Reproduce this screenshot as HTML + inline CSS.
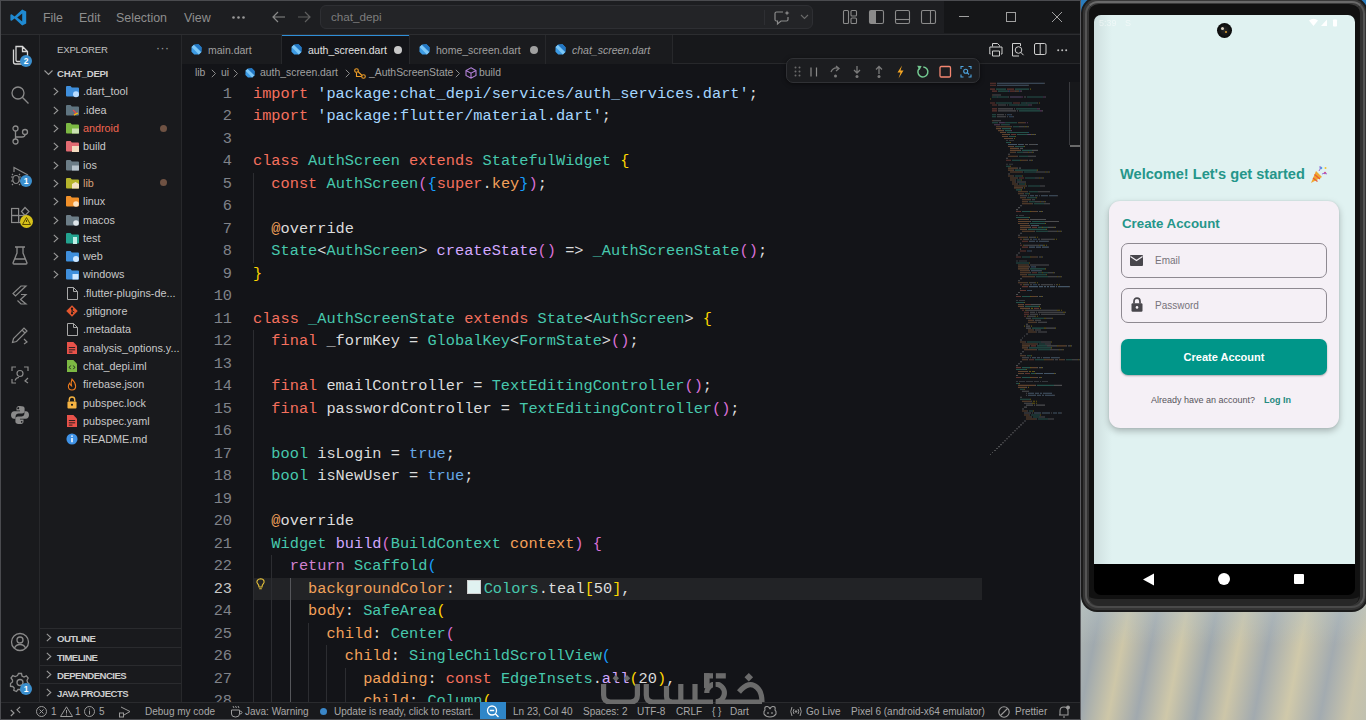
<!DOCTYPE html><html><head><meta charset="utf-8"><style>
*{box-sizing:border-box;margin:0;padding:0}
html,body{width:1366px;height:720px;overflow:hidden;background:#1b1c1f;font-family:"Liberation Sans",sans-serif}
.a{position:absolute}
svg{position:absolute;overflow:visible}
#win{position:absolute;left:0;top:0;width:1081px;height:720px;background:#181a1c;overflow:hidden}
#title{left:0;top:0;width:1081px;height:35px;background:#1d1e21;border-bottom:1px solid #2c2d30}
#wctl{left:944px;top:0;width:137px;height:33px;background:#151618}
.menu{top:10.5px;font-size:12.4px;color:#8e8e8e;white-space:nowrap}
#search{left:320px;top:5px;width:493px;height:24px;background:#232427;border:1px solid #2e2f33;border-radius:6px}
#act{left:0;top:35px;width:40px;height:667px;background:#191a1d;border-right:1px solid #27282b}
#side{left:40px;top:35px;width:142px;height:667px;background:#191a1d;border-right:1px solid #27282b}
.tr{position:absolute;left:0;width:141px;height:18px;font-size:10.8px;color:#c8c8c8;white-space:nowrap;line-height:18px}
#tabs{left:182px;top:35px;width:899px;height:29px;background:#17181b;border-bottom:1px solid #27282b}
.tab{position:absolute;top:0;height:29px;border-right:1px solid #27282b;font-size:10.5px;color:#9a9a9a;line-height:29px;white-space:nowrap}
#crumb{left:182px;top:64px;width:899px;height:18px;background:#131418;font-size:10.4px;color:#a0a0a0;line-height:18px;white-space:nowrap}
#ed{left:182px;top:82px;width:899px;height:620px;background:#131418;overflow:hidden}
.ln{position:absolute;left:0;width:50px;text-align:right;font-family:"Liberation Mono",monospace;font-size:15.3px;color:#6e7681;height:22.5px;line-height:22.5px}
.cl{position:absolute;left:71px;font-family:"Liberation Mono",monospace;font-size:15.3px;color:#dcdcdc;height:22.5px;line-height:22.5px;white-space:pre}
.g{position:absolute;width:1px;background:#2f3034}
.k{color:#f5705e}.s{color:#a5d6ff}.t{color:#47c8ad}.f{color:#d2a8ff}.p{color:#f3a15a}.r{color:#d282d0}.b{color:#67a8e6}
.Y{color:#ffd700}.M{color:#da70d6}.U{color:#179fff}.w{color:#dcdcdc}.at{color:#f3a15a}
#status{left:0;top:702px;width:1081px;height:18px;background:#18191c;border-top:1px solid #2a2b2e;font-size:10px;color:#a8a8a8;line-height:16px;white-space:nowrap}
.st{position:absolute;top:1px}
#emu{left:1081px;top:0;width:285px;height:720px;background:#9aa5a6}
</style></head><body>
<div id="win">
<div id="title" class="a">
<div id="wctl" class="a"></div>
<svg style="left:10px;top:9px" width="17" height="17" viewBox="0 0 17 17"><path d="M12.2 0.6 L16.2 2.5 V14.5 L12.2 16.4 L4.6 9.5 L1.6 11.8 L0.4 11.2 V5.8 L1.6 5.2 L4.6 7.5 Z M12.2 4.6 L7.2 8.5 L12.2 12.4 Z" fill="#1f8ad2"/></svg>
<div class="a menu" style="left:43px">File</div>
<div class="a menu" style="left:79px">Edit</div>
<div class="a menu" style="left:116px">Selection</div>
<div class="a menu" style="left:184px">View</div>
<svg style="left:232px;top:16px" width="14" height="4"><circle cx="1.5" cy="1.5" r="1.3" fill="#9a9a9a"/><circle cx="6.5" cy="1.5" r="1.3" fill="#9a9a9a"/><circle cx="11.5" cy="1.5" r="1.3" fill="#9a9a9a"/></svg>
<svg style="left:272px;top:11px" width="14" height="12"><path d="M6 1 L1 6 L6 11 M1 6 H13" stroke="#8a8a8a" stroke-width="1.2" fill="none"/></svg>
<svg style="left:297px;top:11px" width="14" height="12"><path d="M8 1 L13 6 L8 11 M1 6 H13" stroke="#5f5f5f" stroke-width="1.2" fill="none"/></svg>
<div id="search" class="a"><div class="a" style="left:10px;top:4px;font-size:11.7px;color:#7d7d7d">chat_depi</div><div class="a" style="left:443px;top:4px;width:1px;height:15px;background:#2e2f33"></div></div>
<svg style="left:774px;top:10px" width="18" height="16" viewBox="0 0 18 16"><path d="M1 3.5 Q1 2 2.5 2 H9 M14 7 V9.5 Q14 11 12.5 11 H7 L3.5 14 V11 H2.5 Q1 11 1 9.5 V3.5" stroke="#8b8b8b" stroke-width="1.2" fill="none"/><path d="M13 0.5 L13.7 2.3 L15.5 3 L13.7 3.7 L13 5.5 L12.3 3.7 L10.5 3 L12.3 2.3Z" fill="#8b8b8b"/></svg>
<svg style="left:800px;top:14px" width="9" height="6"><path d="M1 1 L4.5 4.5 L8 1" stroke="#6a6a6a" stroke-width="1.1" fill="none"/></svg>
<svg style="left:843px;top:10px" width="100" height="15" viewBox="0 0 100 15" fill="none" stroke="#8b8b8b" stroke-width="1.1"><rect x="0.5" y="0.5" width="5" height="13" rx="1"/><rect x="8" y="0.5" width="5.5" height="5.5" rx="1"/><rect x="8" y="8" width="5.5" height="5.5" rx="1"/><rect x="26.5" y="0.5" width="14" height="13" rx="1.5"/><rect x="27" y="1" width="6" height="12" fill="#8b8b8b" stroke="none"/><rect x="52.5" y="0.5" width="14" height="13" rx="1.5"/><path d="M52.5 9.5 H66.5"/><rect x="78.5" y="0.5" width="14" height="13" rx="1.5"/><path d="M87.5 0.5 V13.5"/></svg>
<svg style="left:959px;top:11px" width="110" height="12" fill="none" stroke="#a0a0a0" stroke-width="1"><path d="M0 5.5 H10"/><rect x="47.5" y="1.5" width="9" height="9"/><path d="M93 1 L103 11 M103 1 L93 11"/></svg>
</div>
<div id="act" class="a">
<svg style="left:11px;top:10px" width="18" height="20" viewBox="0 0 18 20" fill="none" stroke="#d6d6d6" stroke-width="1.3"><path d="M5 1.5 H11.5 L16.5 6.5 V15 Q16.5 16.5 15 16.5 H6.5 Q5 16.5 5 15 Z M11.5 1.5 V6.5 H16.5"/><path d="M2.5 4.5 V17 Q2.5 19 4.5 19 H13"/></svg>
<div class="a" style="left:20px;top:20px;width:12px;height:12px;border-radius:6px;background:#3b8fce;color:#fff;font-size:8.5px;font-weight:bold;text-align:center;line-height:12px">2</div>
<svg style="left:11px;top:51px" width="18" height="18" fill="none" stroke="#8a8a8a" stroke-width="1.3"><circle cx="7" cy="7" r="6"/><path d="M11.3 11.3 L17.5 17.5"/></svg>
<svg style="left:12px;top:90px" width="16" height="20" fill="none" stroke="#8a8a8a" stroke-width="1.3"><circle cx="3.5" cy="3.5" r="2.5"/><circle cx="3.5" cy="16.5" r="2.5"/><circle cx="13" cy="7" r="2.5"/><path d="M3.5 6 V14 M13 9.5 Q13 12 10 12 H3.5"/></svg>
<svg style="left:10px;top:131px" width="20" height="20" fill="none" stroke="#8a8a8a" stroke-width="1.2"><path d="M4 6 V1.5 L18 9"/><ellipse cx="6" cy="13.5" rx="3.2" ry="4"/><path d="M1 11 H3 M1 15 H3 M9 11 H11 M9 15 H11 M3 9 L2 8 M9 9 L10 8 M3 18 L2 19 M9 18 L10 19"/></svg>
<div class="a" style="left:20px;top:140px;width:12px;height:12px;border-radius:6px;background:#3b8fce;color:#fff;font-size:8.5px;font-weight:bold;text-align:center;line-height:12px">1</div>
<svg style="left:11px;top:171px" width="20" height="20" fill="none" stroke="#8a8a8a" stroke-width="1.2"><rect x="0.6" y="2.5" width="7" height="7"/><rect x="0.6" y="9.5" width="7" height="7"/><rect x="7.6" y="9.5" width="7" height="7"/><path d="M10.5 5.5 L14 1.5 L18 5.5 L14 9.5Z"/></svg>
<div class="a" style="left:20px;top:180px;width:13px;height:13px;border-radius:7px;background:#d7c21a"></div>
<svg style="left:22px;top:182px" width="9" height="8" fill="none" stroke="#5a4b00" stroke-width="1"><path d="M4.5 0.5 L8.5 7.5 H0.5Z M4.5 3 V5"/></svg>
<svg style="left:12px;top:211px" width="16" height="19" fill="none" stroke="#8a8a8a" stroke-width="1.3"><path d="M3 1 H13 M5 1 V7 L1 17 Q1 18 2 18 H14 Q15 18 15 17 L11 7 V1 M3 13 H13"/></svg>
<svg style="left:10px;top:250px" width="18" height="20" fill="none" stroke="#8a8a8a" stroke-width="1.2"><path d="M11 1 H16 L5.5 11 L3 8.5 Z M11 9.5 H16 L10.5 14.5 L16 19 H11 L7.5 15.5"/></svg>
<svg style="left:11px;top:291px" width="18" height="19" fill="none" stroke="#8a8a8a" stroke-width="1.2"><path d="M1.5 16.5 L2.5 12.5 L13 2 L16 5 L5.5 15.5 Z M11 4 L14 7 M13 13 L16 16 L13 18"/></svg>
<svg style="left:11px;top:331px" width="18" height="18" fill="none" stroke="#8a8a8a" stroke-width="1.2"><path d="M1 5 V1 H5 M13 1 H17 V5 M1 13 V17 H5 M17 12 L14 15 L17 17"/><circle cx="9" cy="7.5" r="3"/><path d="M4 14.5 Q5 11.5 8 11.5"/></svg>
<svg style="left:10px;top:370px" width="20" height="20" viewBox="0 0 20 20"><path fill-rule="evenodd" d="M9.9 1 C7.9 1 6.5 1.6 6.5 3.3 V5.5 H10 V6.2 H4.2 C2.4 6.2 1 7.6 1 10 C1 12.4 2.2 13.8 4 13.8 H5.6 V11.6 C5.6 9.9 7 8.6 8.7 8.6 H12.1 C13.5 8.6 14.6 7.5 14.6 6.1 V3.3 C14.6 1.8 13 1 9.9 1 Z M8.3 2.4 A0.85 0.85 0 1 0 8.31 2.4Z" fill="#8a8a8a"/><path fill-rule="evenodd" d="M10.1 19 C12.1 19 13.5 18.4 13.5 16.7 V14.5 H10 V13.8 H15.8 C17.6 13.8 19 12.4 19 10 C19 7.6 17.8 6.2 16 6.2 H14.4 V8.4 C14.4 10.1 13 11.4 11.3 11.4 H7.9 C6.5 11.4 5.4 12.5 5.4 13.9 V16.7 C5.4 18.2 7 19 10.1 19 Z" fill="#8a8a8a"/><circle cx="8.3" cy="3.2" r="0.85" fill="#17181b"/><circle cx="11.7" cy="16.8" r="0.85" fill="#17181b"/></svg>
<svg style="left:10px;top:597px" width="20" height="20" fill="none" stroke="#8a8a8a" stroke-width="1.3"><circle cx="10" cy="10" r="8.5"/><circle cx="10" cy="8" r="3"/><path d="M4.5 16 Q6 12.5 10 12.5 Q14 12.5 15.5 16"/></svg>
<svg style="left:10px;top:637px" width="20" height="20" viewBox="0 0 20 20" fill="none" stroke="#8a8a8a" stroke-width="1.3"><path d="M8.5 1.5 H11.5 L12 4 L14 5 L16.3 3.8 L18.2 6 L17 8.3 L17.5 10.5 L19 11.8 L18 14.5 L15.5 14.7 L14 16.3 L14.2 18.7 L11.5 19.5 L10 17.5 H8 L6.5 19.5 L3.8 18.3 L4.2 16 L2.7 14.5 L0.5 14.3 L0.5 11.5 L2.5 10 L2.5 8 L1 6 L2.8 3.6 L5.2 4.5 L7.5 3.5Z"/><circle cx="10" cy="10.5" r="3"/></svg>
<div class="a" style="left:20px;top:648px;width:12px;height:12px;border-radius:6px;background:#3b8fce;color:#fff;font-size:8.5px;font-weight:bold;text-align:center;line-height:12px">1</div>
</div>
<div id="side" class="a">
<div class="a" style="left:17px;top:9px;font-size:9.6px;color:#c0c0c0;letter-spacing:-0.2px">EXPLORER</div>
<div class="a" style="left:116px;top:6px;font-size:12px;color:#a0a0a0;letter-spacing:0.5px">···</div>
<svg style="left:4px;top:35px" width="9" height="6"><path d="M0.5 0.5 L4.5 4.5 L8.5 0.5" stroke="#9a9a9a" stroke-width="1.1" fill="none"/></svg>
<div class="a" style="left:17px;top:33px;font-size:9.6px;font-weight:bold;color:#cfcfcf;letter-spacing:-0.3px">CHAT_DEPI</div>
<div class="tr" style="top:47.4px"><svg style="left:13px;top:5px" width="6" height="9"><path d="M0.8 0.8 L4.8 4.5 L0.8 8.2" stroke="#9a9a9a" stroke-width="1.1" fill="none"/></svg><svg style="left:26px;top:4px" width="13" height="11" viewBox="0 0 13 11"><path d="M0 1 Q0 0 1 0 H4.5 L5.8 1.5 H12 Q13 1.5 13 2.5 V9.5 Q13 10.5 12 10.5 H1 Q0 10.5 0 9.5Z" fill="#3f8fdc"/><circle cx="10" cy="8.3" r="3" fill="#b8dcff"/></svg><div class="a" style="left:43px;top:0;color:#c8c8c8">.dart_tool</div></div>
<div class="tr" style="top:65.7px"><svg style="left:13px;top:5px" width="6" height="9"><path d="M0.8 0.8 L4.8 4.5 L0.8 8.2" stroke="#9a9a9a" stroke-width="1.1" fill="none"/></svg><svg style="left:26px;top:4px" width="13" height="11" viewBox="0 0 13 11"><path d="M0 1 Q0 0 1 0 H4.5 L5.8 1.5 H12 Q13 1.5 13 2.5 V9.5 Q13 10.5 12 10.5 H1 Q0 10.5 0 9.5Z" fill="#5f7480"/><path d="M7 5 L10 8 L8 10" stroke="#e5484d" stroke-width="1.2" fill="none"/><path d="M8 10 L12 8" stroke="#f5c400" stroke-width="1.2"/></svg><div class="a" style="left:43px;top:0;color:#c8c8c8">.idea</div></div>
<div class="tr" style="top:84.0px"><svg style="left:13px;top:5px" width="6" height="9"><path d="M0.8 0.8 L4.8 4.5 L0.8 8.2" stroke="#9a9a9a" stroke-width="1.1" fill="none"/></svg><svg style="left:26px;top:4px" width="13" height="11" viewBox="0 0 13 11"><path d="M0 1 Q0 0 1 0 H4.5 L5.8 1.5 H12 Q13 1.5 13 2.5 V9.5 Q13 10.5 12 10.5 H1 Q0 10.5 0 9.5Z" fill="#7cb843"/><rect x="6" y="5.5" width="7" height="5" fill="#c9e0b0"/></svg><div class="a" style="left:43px;top:0;color:#f0644f">android</div><div class="a" style="left:120px;top:5.5px;width:7px;height:7px;border-radius:4px;background:#6f5243"></div></div>
<div class="tr" style="top:102.3px"><svg style="left:13px;top:5px" width="6" height="9"><path d="M0.8 0.8 L4.8 4.5 L0.8 8.2" stroke="#9a9a9a" stroke-width="1.1" fill="none"/></svg><svg style="left:26px;top:4px" width="13" height="11" viewBox="0 0 13 11"><path d="M0 1 Q0 0 1 0 H4.5 L5.8 1.5 H12 Q13 1.5 13 2.5 V9.5 Q13 10.5 12 10.5 H1 Q0 10.5 0 9.5Z" fill="#e26b72"/><rect x="6" y="5" width="7" height="6" fill="#f4dcc0"/></svg><div class="a" style="left:43px;top:0;color:#c8c8c8">build</div></div>
<div class="tr" style="top:120.6px"><svg style="left:13px;top:5px" width="6" height="9"><path d="M0.8 0.8 L4.8 4.5 L0.8 8.2" stroke="#9a9a9a" stroke-width="1.1" fill="none"/></svg><svg style="left:26px;top:4px" width="13" height="11" viewBox="0 0 13 11"><path d="M0 1 Q0 0 1 0 H4.5 L5.8 1.5 H12 Q13 1.5 13 2.5 V9.5 Q13 10.5 12 10.5 H1 Q0 10.5 0 9.5Z" fill="#6c7d87"/><rect x="6" y="5.5" width="7" height="5" fill="#b8c4cc"/></svg><div class="a" style="left:43px;top:0;color:#c8c8c8">ios</div></div>
<div class="tr" style="top:138.9px"><svg style="left:13px;top:5px" width="6" height="9"><path d="M0.8 0.8 L4.8 4.5 L0.8 8.2" stroke="#9a9a9a" stroke-width="1.1" fill="none"/></svg><svg style="left:26px;top:4px" width="13" height="11" viewBox="0 0 13 11"><path d="M0 1 Q0 0 1 0 H4.5 L5.8 1.5 H12 Q13 1.5 13 2.5 V9.5 Q13 10.5 12 10.5 H1 Q0 10.5 0 9.5Z" fill="#b6b52c"/><path d="M6 6 L9.5 4 L13 6 V10.5 H6Z" fill="#f4e3c4"/></svg><div class="a" style="left:43px;top:0;color:#d9a37a">lib</div><div class="a" style="left:120px;top:5.5px;width:7px;height:7px;border-radius:4px;background:#6f5243"></div></div>
<div class="tr" style="top:157.2px"><svg style="left:13px;top:5px" width="6" height="9"><path d="M0.8 0.8 L4.8 4.5 L0.8 8.2" stroke="#9a9a9a" stroke-width="1.1" fill="none"/></svg><svg style="left:26px;top:4px" width="13" height="11" viewBox="0 0 13 11"><path d="M0 1 Q0 0 1 0 H4.5 L5.8 1.5 H12 Q13 1.5 13 2.5 V9.5 Q13 10.5 12 10.5 H1 Q0 10.5 0 9.5Z" fill="#f0902a"/><circle cx="10" cy="8" r="2.8" fill="#fde3c0"/></svg><div class="a" style="left:43px;top:0;color:#c8c8c8">linux</div></div>
<div class="tr" style="top:175.5px"><svg style="left:13px;top:5px" width="6" height="9"><path d="M0.8 0.8 L4.8 4.5 L0.8 8.2" stroke="#9a9a9a" stroke-width="1.1" fill="none"/></svg><svg style="left:26px;top:4px" width="13" height="11" viewBox="0 0 13 11"><path d="M0 1 Q0 0 1 0 H4.5 L5.8 1.5 H12 Q13 1.5 13 2.5 V9.5 Q13 10.5 12 10.5 H1 Q0 10.5 0 9.5Z" fill="#6c7d87"/><circle cx="10" cy="8" r="2.8" fill="#dfe6ea"/></svg><div class="a" style="left:43px;top:0;color:#c8c8c8">macos</div></div>
<div class="tr" style="top:193.8px"><svg style="left:13px;top:5px" width="6" height="9"><path d="M0.8 0.8 L4.8 4.5 L0.8 8.2" stroke="#9a9a9a" stroke-width="1.1" fill="none"/></svg><svg style="left:26px;top:4px" width="13" height="11" viewBox="0 0 13 11"><path d="M0 1 Q0 0 1 0 H4.5 L5.8 1.5 H12 Q13 1.5 13 2.5 V9.5 Q13 10.5 12 10.5 H1 Q0 10.5 0 9.5Z" fill="#23a38f"/><rect x="7" y="4" width="4" height="7" fill="#c0efe6"/></svg><div class="a" style="left:43px;top:0;color:#c8c8c8">test</div></div>
<div class="tr" style="top:212.1px"><svg style="left:13px;top:5px" width="6" height="9"><path d="M0.8 0.8 L4.8 4.5 L0.8 8.2" stroke="#9a9a9a" stroke-width="1.1" fill="none"/></svg><svg style="left:26px;top:4px" width="13" height="11" viewBox="0 0 13 11"><path d="M0 1 Q0 0 1 0 H4.5 L5.8 1.5 H12 Q13 1.5 13 2.5 V9.5 Q13 10.5 12 10.5 H1 Q0 10.5 0 9.5Z" fill="#3f8fdc"/><circle cx="10" cy="8" r="3" fill="#cfe8ff"/></svg><div class="a" style="left:43px;top:0;color:#c8c8c8">web</div></div>
<div class="tr" style="top:230.4px"><svg style="left:13px;top:5px" width="6" height="9"><path d="M0.8 0.8 L4.8 4.5 L0.8 8.2" stroke="#9a9a9a" stroke-width="1.1" fill="none"/></svg><svg style="left:26px;top:4px" width="13" height="11" viewBox="0 0 13 11"><path d="M0 1 Q0 0 1 0 H4.5 L5.8 1.5 H12 Q13 1.5 13 2.5 V9.5 Q13 10.5 12 10.5 H1 Q0 10.5 0 9.5Z" fill="#3f8fdc"/><rect x="6.5" y="5" width="6" height="5.5" fill="#cfe8ff"/></svg><div class="a" style="left:43px;top:0;color:#c8c8c8">windows</div></div>
<div class="tr" style="top:248.7px"><svg style="left:26.5px;top:3px" width="11" height="13" fill="none" stroke="#a8a8a8" stroke-width="1"><path d="M0.5 0.5 H6.5 L10.5 4.5 V12.5 H0.5Z M6.5 0.5 V4.5 H10.5"/></svg><div class="a" style="left:43px;top:0;color:#c8c8c8">.flutter-plugins-de...</div></div>
<div class="tr" style="top:267.0px"><svg style="left:26px;top:3px" width="12" height="12" viewBox="0 0 13 13"><path d="M6.5 0.3 L12.7 6.5 L6.5 12.7 L0.3 6.5Z" fill="#e4572e"/><circle cx="6.5" cy="4" r="1.2" fill="#17181b"/><circle cx="6.5" cy="9" r="1.2" fill="#17181b"/><path d="M6.5 4 V9 M6.5 6 L9 7.5" stroke="#17181b" stroke-width="1"/></svg><div class="a" style="left:43px;top:0;color:#c8c8c8">.gitignore</div></div>
<div class="tr" style="top:285.3px"><svg style="left:26.5px;top:3px" width="11" height="13" fill="none" stroke="#a8a8a8" stroke-width="1"><path d="M0.5 0.5 H6.5 L10.5 4.5 V12.5 H0.5Z M6.5 0.5 V4.5 H10.5"/></svg><div class="a" style="left:43px;top:0;color:#c8c8c8">.metadata</div></div>
<div class="tr" style="top:303.6px"><svg style="left:26.5px;top:3.5px" width="10" height="12" viewBox="0 0 11 13"><path d="M0 0 H7 L11 4 V13 H0Z" fill="#e8524a"/><path d="M2 6 H9 M2 8.5 H9 M2 11 H6" stroke="#17181b" stroke-width="1"/></svg><div class="a" style="left:43px;top:0;color:#c8c8c8">analysis_options.y...</div></div>
<div class="tr" style="top:321.9px"><svg style="left:26.5px;top:3.5px" width="10" height="12" viewBox="0 0 11 13"><path d="M0 0 H7 L11 4 V13 H0Z" fill="#7cb843"/><path d="M4 6 L2.5 8 L4 10 M7 6 L8.5 8 L7 10" stroke="#17181b" stroke-width="1" fill="none"/></svg><div class="a" style="left:43px;top:0;color:#c8c8c8">chat_depi.iml</div></div>
<div class="tr" style="top:340.2px"><svg style="left:26.5px;top:2.5px" width="10" height="13" viewBox="0 0 11 14" fill="none" stroke="#f07c1e" stroke-width="1.2"><path d="M5.5 1 Q9.5 5 9.5 9 Q9.5 13 5.5 13 Q1.5 13 1.5 9 Q1.5 7 3 5.5 Q3.5 8 5 8.5 Q4 5 5.5 1Z"/></svg><div class="a" style="left:43px;top:0;color:#c8c8c8">firebase.json</div></div>
<div class="tr" style="top:358.5px"><svg style="left:26.5px;top:2.5px" width="10" height="13" viewBox="0 0 11 14"><path d="M2.5 6 V4 Q2.5 1 5.5 1 Q8.5 1 8.5 4 V6" stroke="#f5b342" stroke-width="1.5" fill="none"/><rect x="0.5" y="6" width="10" height="7.5" rx="1" fill="#f5b342"/><circle cx="5.5" cy="9.5" r="1.2" fill="#17181b"/></svg><div class="a" style="left:43px;top:0;color:#c8c8c8">pubspec.lock</div></div>
<div class="tr" style="top:376.8px"><svg style="left:26.5px;top:3.5px" width="10" height="12" viewBox="0 0 11 13"><path d="M0 0 H7 L11 4 V13 H0Z" fill="#e8524a"/><path d="M2 6 H9 M2 8.5 H9 M2 11 H6" stroke="#17181b" stroke-width="1"/></svg><div class="a" style="left:43px;top:0;color:#c8c8c8">pubspec.yaml</div></div>
<div class="tr" style="top:395.1px"><svg style="left:26px;top:3px" width="12" height="12" viewBox="0 0 13 13"><circle cx="6.5" cy="6.5" r="6" fill="#3f92e6"/><path d="M6.5 5.5 V10" stroke="#fff" stroke-width="1.6"/><circle cx="6.5" cy="3.4" r="0.9" fill="#fff"/></svg><div class="a" style="left:43px;top:0;color:#c8c8c8">README.md</div></div>
<div class="a" style="left:0;top:593px;width:141px;height:19px;border-top:1px solid #2a2b2e"><svg style="left:6px;top:4px" width="6" height="9"><path d="M0.8 0.8 L4.8 4.5 L0.8 8.2" stroke="#9a9a9a" stroke-width="1.1" fill="none"/></svg><div class="a" style="left:17px;top:4px;font-size:9.6px;font-weight:bold;color:#cdcdcd;letter-spacing:-0.55px">OUTLINE</div></div>
<div class="a" style="left:0;top:612px;width:141px;height:19px;border-top:1px solid #2a2b2e"><svg style="left:6px;top:4px" width="6" height="9"><path d="M0.8 0.8 L4.8 4.5 L0.8 8.2" stroke="#9a9a9a" stroke-width="1.1" fill="none"/></svg><div class="a" style="left:17px;top:4px;font-size:9.6px;font-weight:bold;color:#cdcdcd;letter-spacing:-0.55px">TIMELINE</div></div>
<div class="a" style="left:0;top:630px;width:141px;height:19px;border-top:1px solid #2a2b2e"><svg style="left:6px;top:4px" width="6" height="9"><path d="M0.8 0.8 L4.8 4.5 L0.8 8.2" stroke="#9a9a9a" stroke-width="1.1" fill="none"/></svg><div class="a" style="left:17px;top:4px;font-size:9.6px;font-weight:bold;color:#cdcdcd;letter-spacing:-0.55px">DEPENDENCIES</div></div>
<div class="a" style="left:0;top:648px;width:141px;height:19px;border-top:1px solid #2a2b2e"><svg style="left:6px;top:4px" width="6" height="9"><path d="M0.8 0.8 L4.8 4.5 L0.8 8.2" stroke="#9a9a9a" stroke-width="1.1" fill="none"/></svg><div class="a" style="left:17px;top:4px;font-size:9.6px;font-weight:bold;color:#cdcdcd;letter-spacing:-0.55px">JAVA PROJECTS</div></div>
</div>
<div id="tabs" class="a">
<div class="tab" style="left:0px;width:100px;background:#1a1b1e;"><svg style="left:9px;top:9px" width="11" height="11" viewBox="0 0 12 12"><path d="M3.2 0.8 L8.2 0.3 L11.5 3.6 L11.3 8.6 L8.6 11.5 L3.5 11.5 L0.5 8.5 L0.6 3.4Z" fill="#3c9ae3"/><path d="M3.2 0.8 L11.3 8.6 L8.6 11.5 L0.6 3.4Z" fill="#7cc7f7"/><path d="M8.2 0.3 L11.5 3.6 L11.3 8.6 L3.2 0.8Z" fill="#2277c4"/></svg><div class="a" style="left:26px;top:1px;color:#a0a0a0">main.dart</div></div>
<div class="tab" style="left:100px;width:128px;background:#131418;border-bottom:1px solid #131418;height:30px;"><div class="a" style="left:0;top:0;width:100%;height:1px;background:#2f8fd8"></div><svg style="left:9px;top:9px" width="11" height="11" viewBox="0 0 12 12"><path d="M3.2 0.8 L8.2 0.3 L11.5 3.6 L11.3 8.6 L8.6 11.5 L3.5 11.5 L0.5 8.5 L0.6 3.4Z" fill="#3c9ae3"/><path d="M3.2 0.8 L11.3 8.6 L8.6 11.5 L0.6 3.4Z" fill="#7cc7f7"/><path d="M8.2 0.3 L11.5 3.6 L11.3 8.6 L3.2 0.8Z" fill="#2277c4"/></svg><div class="a" style="left:26px;top:1px;color:#e0e0e0">auth_screen.dart</div><div class="a" style="left:112px;top:11px;width:8px;height:8px;border-radius:4px;background:#c8c8c8"></div></div>
<div class="tab" style="left:228px;width:136px;background:#1a1b1e;"><svg style="left:9px;top:9px" width="11" height="11" viewBox="0 0 12 12"><path d="M3.2 0.8 L8.2 0.3 L11.5 3.6 L11.3 8.6 L8.6 11.5 L3.5 11.5 L0.5 8.5 L0.6 3.4Z" fill="#3c9ae3"/><path d="M3.2 0.8 L11.3 8.6 L8.6 11.5 L0.6 3.4Z" fill="#7cc7f7"/><path d="M8.2 0.3 L11.5 3.6 L11.3 8.6 L3.2 0.8Z" fill="#2277c4"/></svg><div class="a" style="left:26px;top:1px;color:#a0a0a0">home_screen.dart</div><div class="a" style="left:120px;top:11px;width:8px;height:8px;border-radius:4px;background:#a0a0a0"></div></div>
<div class="tab" style="left:364px;width:127px;background:#1a1b1e;"><svg style="left:9px;top:9px" width="11" height="11" viewBox="0 0 12 12"><path d="M3.2 0.8 L8.2 0.3 L11.5 3.6 L11.3 8.6 L8.6 11.5 L3.5 11.5 L0.5 8.5 L0.6 3.4Z" fill="#3c9ae3"/><path d="M3.2 0.8 L11.3 8.6 L8.6 11.5 L0.6 3.4Z" fill="#7cc7f7"/><path d="M8.2 0.3 L11.5 3.6 L11.3 8.6 L3.2 0.8Z" fill="#2277c4"/></svg><div class="a" style="left:26px;top:1px;font-style:italic;color:#a0a0a0">chat_screen.dart</div></div>
<svg style="left:807px;top:7px" width="80" height="16" fill="none" stroke="#cfcfcf" stroke-width="1"><path d="M3.5 4.5 V1.5 H8.5 L10.5 3.5 V4.5 M1.5 12 H0.8 V5 H13 V12 H12 M3.5 9 H10.5 V14 H3.5Z"/><path d="M30 14 H23.5 V1.5 H31.5 V4"/><circle cx="29.5" cy="8" r="3.3"/><path d="M31.8 10.3 L34.5 13.2"/><rect x="45.5" y="1.5" width="11.5" height="11" rx="1.5"/><path d="M51.2 1.5 V12.5"/></svg>
<svg style="left:875px;top:14px" width="11" height="3"><circle cx="1.2" cy="1.2" r="1" fill="#bdbdbd"/><circle cx="5.2" cy="1.2" r="1" fill="#bdbdbd"/><circle cx="9.2" cy="1.2" r="1" fill="#bdbdbd"/></svg>
</div>
<div id="crumb" class="a">
<div class="a" style="left:13px;top:0">lib</div><svg style="left:29px;top:5px" width="6" height="9"><path d="M0.8 0.8 L4.5 4.5 L0.8 8.2" stroke="#8a8a8a" stroke-width="1" fill="none"/></svg><div class="a" style="left:39px;top:0">ui</div><svg style="left:51px;top:5px" width="6" height="9"><path d="M0.8 0.8 L4.5 4.5 L0.8 8.2" stroke="#8a8a8a" stroke-width="1" fill="none"/></svg>
<svg style="left:63px;top:4px" width="10" height="10" viewBox="0 0 12 12"><path d="M3.2 0.8 L8.2 0.3 L11.5 3.6 L11.3 8.6 L8.6 11.5 L3.5 11.5 L0.5 8.5 L0.6 3.4Z" fill="#3c9ae3"/><path d="M3.2 0.8 L11.3 8.6 L8.6 11.5 L0.6 3.4Z" fill="#7cc7f7"/><path d="M8.2 0.3 L11.5 3.6 L11.3 8.6 L3.2 0.8Z" fill="#2277c4"/></svg>
<div class="a" style="left:78px;top:0">auth_screen.dart</div><svg style="left:163px;top:5px" width="6" height="9"><path d="M0.8 0.8 L4.5 4.5 L0.8 8.2" stroke="#8a8a8a" stroke-width="1" fill="none"/></svg>
<svg style="left:172px;top:4px" width="12" height="11" fill="none" stroke="#ee9d28" stroke-width="1.1"><circle cx="2.5" cy="2.5" r="1.8"/><circle cx="9.5" cy="8.5" r="1.8"/><path d="M4 3.5 L8 7.5 M2.5 4.5 V8.5 H7.5"/></svg>
<div class="a" style="left:187px;top:0">_AuthScreenState</div><svg style="left:273px;top:5px" width="6" height="9"><path d="M0.8 0.8 L4.5 4.5 L0.8 8.2" stroke="#8a8a8a" stroke-width="1" fill="none"/></svg>
<svg style="left:283px;top:3px" width="12" height="12" viewBox="0 0 12 12" fill="none" stroke="#b180d7" stroke-width="1.1"><path d="M6 0.8 L11 3.5 V8.5 L6 11.2 L1 8.5 V3.5Z M1 3.5 L6 6.2 L11 3.5 M6 6.2 V11.2"/></svg>
<div class="a" style="left:297px;top:0">build</div>
</div>
<div id="ed" class="a">
<div class="a" style="left:72px;top:495.75px;width:728px;height:22.5px;background:#222326"></div>
<div class="g" style="left:71.0px;top:90.75px;height:90.00px;background:#2c2d31"></div>
<div class="g" style="left:71.0px;top:248.25px;height:382.50px;background:#2c2d31"></div>
<div class="g" style="left:89.4px;top:473.25px;height:157.50px;background:#2c2d31"></div>
<div class="g" style="left:107.7px;top:495.75px;height:135.00px;background:#55565a"></div>
<div class="g" style="left:126.1px;top:540.75px;height:90.00px;background:#2c2d31"></div>
<div class="g" style="left:144.4px;top:563.25px;height:67.50px;background:#2c2d31"></div>
<div class="g" style="left:162.8px;top:585.75px;height:45.00px;background:#2c2d31"></div>
<div class="ln" style="top:0.75px;color:#80838a">1</div>
<div class="cl" style="top:0.75px"><span class="k">import</span><span class="w"> </span><span class="s">&#x27;package:chat_depi/services/auth_services.dart&#x27;</span><span class="w">;</span></div>
<div class="ln" style="top:23.25px;color:#80838a">2</div>
<div class="cl" style="top:23.25px"><span class="k">import</span><span class="w"> </span><span class="s">&#x27;package:flutter/material.dart&#x27;</span><span class="w">;</span></div>
<div class="ln" style="top:45.75px;color:#80838a">3</div>
<div class="ln" style="top:68.25px;color:#80838a">4</div>
<div class="cl" style="top:68.25px"><span class="k">class</span><span class="w"> </span><span class="t">AuthScreen</span><span class="w"> </span><span class="k">extends</span><span class="w"> </span><span class="t">StatefulWidget</span><span class="w"> </span><span class="Y">{</span></div>
<div class="ln" style="top:90.75px;color:#80838a">5</div>
<div class="cl" style="top:90.75px"><span class="w">  </span><span class="k">const</span><span class="w"> </span><span class="t">AuthScreen</span><span class="M">(</span><span class="U">{</span><span class="k">super</span><span class="w">.</span><span class="p">key</span><span class="U">}</span><span class="M">)</span><span class="w">;</span></div>
<div class="ln" style="top:113.25px;color:#80838a">6</div>
<div class="ln" style="top:135.75px;color:#80838a">7</div>
<div class="cl" style="top:135.75px"><span class="w">  </span><span class="at">@</span><span class="w">override</span></div>
<div class="ln" style="top:158.25px;color:#80838a">8</div>
<div class="cl" style="top:158.25px"><span class="w">  </span><span class="t">State</span><span class="w">&lt;</span><span class="t">AuthScreen</span><span class="w">&gt; </span><span class="f">createState</span><span class="M">()</span><span class="w"> =&gt; </span><span class="t">_AuthScreenState</span><span class="M">()</span><span class="w">;</span></div>
<div class="ln" style="top:180.75px;color:#80838a">9</div>
<div class="cl" style="top:180.75px"><span class="Y">}</span></div>
<div class="ln" style="top:203.25px;color:#80838a">10</div>
<div class="ln" style="top:225.75px;color:#80838a">11</div>
<div class="cl" style="top:225.75px"><span class="k">class</span><span class="w"> </span><span class="t">_AuthScreenState</span><span class="w"> </span><span class="k">extends</span><span class="w"> </span><span class="t">State</span><span class="w">&lt;</span><span class="t">AuthScreen</span><span class="w">&gt; </span><span class="Y">{</span></div>
<div class="ln" style="top:248.25px;color:#80838a">12</div>
<div class="cl" style="top:248.25px"><span class="w">  </span><span class="k">final</span><span class="w"> _formKey = </span><span class="t">GlobalKey</span><span class="w">&lt;</span><span class="t">FormState</span><span class="w">&gt;</span><span class="M">()</span><span class="w">;</span></div>
<div class="ln" style="top:270.75px;color:#80838a">13</div>
<div class="ln" style="top:293.25px;color:#80838a">14</div>
<div class="cl" style="top:293.25px"><span class="w">  </span><span class="k">final</span><span class="w"> emailController = </span><span class="t">TextEditingController</span><span class="M">()</span><span class="w">;</span></div>
<div class="ln" style="top:315.75px;color:#80838a">15</div>
<div class="cl" style="top:315.75px"><span class="w">  </span><span class="k">final</span><span class="w"> passwordController = </span><span class="t">TextEditingController</span><span class="M">()</span><span class="w">;</span></div>
<div class="ln" style="top:338.25px;color:#80838a">16</div>
<div class="ln" style="top:360.75px;color:#80838a">17</div>
<div class="cl" style="top:360.75px"><span class="w">  </span><span class="t">bool</span><span class="w"> isLogin = </span><span class="b">true</span><span class="w">;</span></div>
<div class="ln" style="top:383.25px;color:#80838a">18</div>
<div class="cl" style="top:383.25px"><span class="w">  </span><span class="t">bool</span><span class="w"> isNewUser = </span><span class="b">true</span><span class="w">;</span></div>
<div class="ln" style="top:405.75px;color:#80838a">19</div>
<div class="ln" style="top:428.25px;color:#80838a">20</div>
<div class="cl" style="top:428.25px"><span class="w">  </span><span class="at">@</span><span class="w">override</span></div>
<div class="ln" style="top:450.75px;color:#80838a">21</div>
<div class="cl" style="top:450.75px"><span class="w">  </span><span class="t">Widget</span><span class="w"> </span><span class="f">build</span><span class="M">(</span><span class="t">BuildContext</span><span class="w"> </span><span class="p">context</span><span class="M">)</span><span class="w"> </span><span class="M">{</span></div>
<div class="ln" style="top:473.25px;color:#80838a">22</div>
<div class="cl" style="top:473.25px"><span class="w">    </span><span class="r">return</span><span class="w"> </span><span class="t">Scaffold</span><span class="U">(</span></div>
<div class="ln" style="top:495.75px;color:#c6c6c6">23</div>
<div class="cl" style="top:495.75px"><span class="w">      </span><span class="p">backgroundColor</span><span class="w">: </span><span style="display:inline-block;width:19.5px;height:13px;vertical-align:-1px"><span style="display:inline-block;margin-left:3px;width:13.5px;height:13.5px;background:#e0f2f1;border:1px solid #d0d0d0;vertical-align:top;margin-top:1.3px"></span></span><span class="t">Colors</span><span class="w">.teal</span><span class="Y">[</span><span class="w">50</span><span class="Y">]</span><span class="w">,</span></div>
<div class="ln" style="top:518.25px;color:#80838a">24</div>
<div class="cl" style="top:518.25px"><span class="w">      </span><span class="p">body</span><span class="w">: </span><span class="t">SafeArea</span><span class="Y">(</span></div>
<div class="ln" style="top:540.75px;color:#80838a">25</div>
<div class="cl" style="top:540.75px"><span class="w">        </span><span class="p">child</span><span class="w">: </span><span class="t">Center</span><span class="M">(</span></div>
<div class="ln" style="top:563.25px;color:#80838a">26</div>
<div class="cl" style="top:563.25px"><span class="w">          </span><span class="p">child</span><span class="w">: </span><span class="t">SingleChildScrollView</span><span class="U">(</span></div>
<div class="ln" style="top:585.75px;color:#80838a">27</div>
<div class="cl" style="top:585.75px"><span class="w">            </span><span class="p">padding</span><span class="w">: </span><span class="k">const</span><span class="w"> </span><span class="t">EdgeInsets</span><span class="w">.</span><span class="f">all</span><span class="Y">(</span><span class="w">20</span><span class="Y">)</span><span class="w">,</span></div>
<div class="ln" style="top:608.25px;color:#80838a">28</div>
<div class="cl" style="top:608.25px"><span class="w">            </span><span class="p">child</span><span class="w">: </span><span class="t">Column</span><span class="Y">(</span></div>
<svg style="left:73.5px;top:496.2px" width="10" height="12" fill="none" stroke="#e8c33a" stroke-width="1.1"><path d="M3 9 Q3 7 1.8 5.8 Q0.5 4.5 1 3 Q1.8 0.8 4.5 0.7 Q7.5 0.8 8 3 Q8.5 4.5 7.2 5.8 Q6 7 6 9 Z M3.2 10.8 H5.8"/></svg>
<svg style="left:0;top:0" width="899" height="620"><g opacity="0.45" stroke-width="1.05" stroke-dasharray="0.75 0.25"><path d="M808.0 1.20h6" stroke="#f7765c"/><path d="M815.0 1.20h47" stroke="#a5d6ff"/><path d="M862.0 1.20h1" stroke="#bdbdbd"/><path d="M808.0 3.17h6" stroke="#f7765c"/><path d="M815.0 3.17h31" stroke="#a5d6ff"/><path d="M846.0 3.17h1" stroke="#bdbdbd"/><path d="M808.0 7.12h5" stroke="#f7765c"/><path d="M814.0 7.12h10" stroke="#47c8ad"/><path d="M825.0 7.12h7" stroke="#f7765c"/><path d="M833.0 7.12h14" stroke="#47c8ad"/><path d="M848.0 7.12h1" stroke="#ffd700"/><path d="M810.0 9.10h5" stroke="#f7765c"/><path d="M816.0 9.10h10" stroke="#47c8ad"/><path d="M826.0 9.10h1" stroke="#da70d6"/><path d="M827.0 9.10h1" stroke="#179fff"/><path d="M828.0 9.10h5" stroke="#f7765c"/><path d="M833.0 9.10h1" stroke="#bdbdbd"/><path d="M834.0 9.10h3" stroke="#f3a15a"/><path d="M837.0 9.10h1" stroke="#179fff"/><path d="M838.0 9.10h1" stroke="#da70d6"/><path d="M839.0 9.10h1" stroke="#bdbdbd"/><path d="M810.0 13.05h1" stroke="#f3a15a"/><path d="M811.0 13.05h8" stroke="#bdbdbd"/><path d="M810.0 15.02h5" stroke="#47c8ad"/><path d="M815.0 15.02h1" stroke="#bdbdbd"/><path d="M816.0 15.02h10" stroke="#47c8ad"/><path d="M826.0 15.02h1" stroke="#bdbdbd"/><path d="M828.0 15.02h11" stroke="#d2a8ff"/><path d="M839.0 15.02h2" stroke="#da70d6"/><path d="M842.0 15.02h2" stroke="#bdbdbd"/><path d="M845.0 15.02h16" stroke="#47c8ad"/><path d="M861.0 15.02h2" stroke="#da70d6"/><path d="M863.0 15.02h1" stroke="#bdbdbd"/><path d="M808.0 17.00h1" stroke="#ffd700"/><path d="M808.0 20.95h5" stroke="#f7765c"/><path d="M814.0 20.95h16" stroke="#47c8ad"/><path d="M831.0 20.95h7" stroke="#f7765c"/><path d="M839.0 20.95h5" stroke="#47c8ad"/><path d="M844.0 20.95h1" stroke="#bdbdbd"/><path d="M845.0 20.95h10" stroke="#47c8ad"/><path d="M855.0 20.95h1" stroke="#bdbdbd"/><path d="M857.0 20.95h1" stroke="#ffd700"/><path d="M810.0 22.93h5" stroke="#f7765c"/><path d="M816.0 22.93h8" stroke="#bdbdbd"/><path d="M825.0 22.93h1" stroke="#bdbdbd"/><path d="M827.0 22.93h9" stroke="#47c8ad"/><path d="M836.0 22.93h1" stroke="#bdbdbd"/><path d="M837.0 22.93h9" stroke="#47c8ad"/><path d="M846.0 22.93h1" stroke="#bdbdbd"/><path d="M847.0 22.93h2" stroke="#da70d6"/><path d="M849.0 22.93h1" stroke="#bdbdbd"/><path d="M810.0 26.88h5" stroke="#f7765c"/><path d="M816.0 26.88h15" stroke="#bdbdbd"/><path d="M832.0 26.88h1" stroke="#bdbdbd"/><path d="M834.0 26.88h21" stroke="#47c8ad"/><path d="M855.0 26.88h2" stroke="#da70d6"/><path d="M857.0 26.88h1" stroke="#bdbdbd"/><path d="M810.0 28.85h5" stroke="#f7765c"/><path d="M816.0 28.85h18" stroke="#bdbdbd"/><path d="M835.0 28.85h1" stroke="#bdbdbd"/><path d="M837.0 28.85h21" stroke="#47c8ad"/><path d="M858.0 28.85h2" stroke="#da70d6"/><path d="M860.0 28.85h1" stroke="#bdbdbd"/><path d="M810.0 32.80h4" stroke="#47c8ad"/><path d="M815.0 32.80h7" stroke="#bdbdbd"/><path d="M823.0 32.80h1" stroke="#bdbdbd"/><path d="M825.0 32.80h4" stroke="#67a8e6"/><path d="M829.0 32.80h1" stroke="#bdbdbd"/><path d="M810.0 34.77h4" stroke="#47c8ad"/><path d="M815.0 34.77h9" stroke="#bdbdbd"/><path d="M825.0 34.77h1" stroke="#bdbdbd"/><path d="M827.0 34.77h4" stroke="#67a8e6"/><path d="M831.0 34.77h1" stroke="#bdbdbd"/><path d="M810.0 38.72h1" stroke="#f3a15a"/><path d="M811.0 38.72h8" stroke="#bdbdbd"/><path d="M810.0 40.70h6" stroke="#47c8ad"/><path d="M817.0 40.70h5" stroke="#d2a8ff"/><path d="M822.0 40.70h1" stroke="#da70d6"/><path d="M823.0 40.70h12" stroke="#47c8ad"/><path d="M836.0 40.70h7" stroke="#f3a15a"/><path d="M843.0 40.70h1" stroke="#da70d6"/><path d="M845.0 40.70h1" stroke="#da70d6"/><path d="M812.0 42.67h6" stroke="#d282d0"/><path d="M819.0 42.67h8" stroke="#47c8ad"/><path d="M827.0 42.67h1" stroke="#179fff"/><path d="M814.0 44.65h15" stroke="#f3a15a"/><path d="M829.0 44.65h1" stroke="#bdbdbd"/><path d="M831.0 44.65h6" stroke="#47c8ad"/><path d="M837.0 44.65h5" stroke="#bdbdbd"/><path d="M842.0 44.65h1" stroke="#ffd700"/><path d="M843.0 44.65h2" stroke="#bdbdbd"/><path d="M845.0 44.65h1" stroke="#ffd700"/><path d="M846.0 44.65h1" stroke="#bdbdbd"/><path d="M814.0 46.62h4" stroke="#f3a15a"/><path d="M818.0 46.62h1" stroke="#bdbdbd"/><path d="M820.0 46.62h8" stroke="#47c8ad"/><path d="M828.0 46.62h1" stroke="#ffd700"/><path d="M816.0 48.60h5" stroke="#f3a15a"/><path d="M821.0 48.60h1" stroke="#bdbdbd"/><path d="M823.0 48.60h6" stroke="#47c8ad"/><path d="M829.0 48.60h1" stroke="#da70d6"/><path d="M818.0 50.57h5" stroke="#f3a15a"/><path d="M823.0 50.57h1" stroke="#bdbdbd"/><path d="M825.0 50.57h21" stroke="#47c8ad"/><path d="M846.0 50.57h1" stroke="#179fff"/><path d="M820.0 52.55h7" stroke="#f3a15a"/><path d="M827.0 52.55h1" stroke="#bdbdbd"/><path d="M829.0 52.55h5" stroke="#f7765c"/><path d="M835.0 52.55h10" stroke="#47c8ad"/><path d="M845.0 52.55h1" stroke="#bdbdbd"/><path d="M846.0 52.55h3" stroke="#d2a8ff"/><path d="M849.0 52.55h1" stroke="#ffd700"/><path d="M850.0 52.55h2" stroke="#bdbdbd"/><path d="M852.0 52.55h1" stroke="#ffd700"/><path d="M853.0 52.55h1" stroke="#bdbdbd"/><path d="M820.0 54.52h5" stroke="#f3a15a"/><path d="M825.0 54.52h1" stroke="#bdbdbd"/><path d="M827.0 54.52h6" stroke="#47c8ad"/><path d="M833.0 54.52h1" stroke="#ffd700"/><path d="M822.0 56.50h8" stroke="#f3a15a"/><path d="M830.0 56.50h1" stroke="#bdbdbd"/><path d="M832.0 56.50h1" stroke="#ffd700"/><path d="M824.0 58.48h2" stroke="#7a7f86"/><path d="M827.0 58.48h5" stroke="#7a7f86"/><path d="M824.0 60.45h4" stroke="#47c8ad"/><path d="M828.0 60.45h1" stroke="#ffd700"/><path d="M826.0 62.42h9" stroke="#a5d6ff"/><path d="M836.0 62.42h5" stroke="#a5d6ff"/><path d="M841.0 62.42h1" stroke="#bdbdbd"/><path d="M843.0 62.42h3" stroke="#bdbdbd"/><path d="M847.0 62.42h7" stroke="#bdbdbd"/><path d="M854.0 62.42h1" stroke="#a5d6ff"/><path d="M855.0 62.42h1" stroke="#bdbdbd"/><path d="M826.0 64.40h5" stroke="#f3a15a"/><path d="M831.0 64.40h1" stroke="#bdbdbd"/><path d="M833.0 64.40h9" stroke="#47c8ad"/><path d="M842.0 64.40h1" stroke="#ffd700"/><path d="M828.0 66.37h8" stroke="#f3a15a"/><path d="M836.0 66.37h1" stroke="#bdbdbd"/><path d="M838.0 66.37h1" stroke="#bdbdbd"/><path d="M839.0 66.37h1" stroke="#bdbdbd"/><path d="M840.0 66.37h1" stroke="#bdbdbd"/><path d="M828.0 68.35h10" stroke="#f3a15a"/><path d="M838.0 68.35h1" stroke="#bdbdbd"/><path d="M840.0 68.35h10" stroke="#47c8ad"/><path d="M850.0 68.35h1" stroke="#bdbdbd"/><path d="M851.0 68.35h4" stroke="#bdbdbd"/><path d="M855.0 68.35h1" stroke="#bdbdbd"/><path d="M828.0 70.32h5" stroke="#f3a15a"/><path d="M833.0 70.32h1" stroke="#bdbdbd"/><path d="M835.0 70.32h6" stroke="#47c8ad"/><path d="M841.0 70.32h1" stroke="#bdbdbd"/><path d="M842.0 70.32h4" stroke="#bdbdbd"/><path d="M846.0 70.32h1" stroke="#ffd700"/><path d="M847.0 70.32h1" stroke="#bdbdbd"/><path d="M848.0 70.32h1" stroke="#bdbdbd"/><path d="M849.0 70.32h1" stroke="#bdbdbd"/><path d="M850.0 70.32h1" stroke="#ffd700"/><path d="M851.0 70.32h1" stroke="#bdbdbd"/><path d="M826.0 72.30h1" stroke="#bdbdbd"/><path d="M827.0 72.30h1" stroke="#bdbdbd"/><path d="M826.0 74.27h9" stroke="#f3a15a"/><path d="M835.0 74.27h1" stroke="#bdbdbd"/><path d="M837.0 74.27h9" stroke="#47c8ad"/><path d="M846.0 74.27h1" stroke="#bdbdbd"/><path d="M847.0 74.27h6" stroke="#bdbdbd"/><path d="M853.0 74.27h1" stroke="#bdbdbd"/><path d="M824.0 76.25h1" stroke="#bdbdbd"/><path d="M825.0 76.25h1" stroke="#bdbdbd"/><path d="M824.0 78.22h5" stroke="#f7765c"/><path d="M830.0 78.22h8" stroke="#47c8ad"/><path d="M838.0 78.22h1" stroke="#ffd700"/><path d="M839.0 78.22h6" stroke="#f3a15a"/><path d="M845.0 78.22h1" stroke="#bdbdbd"/><path d="M847.0 78.22h1" stroke="#bdbdbd"/><path d="M848.0 78.22h1" stroke="#bdbdbd"/><path d="M849.0 78.22h1" stroke="#ffd700"/><path d="M850.0 78.22h1" stroke="#bdbdbd"/><path d="M824.0 82.17h2" stroke="#7a7f86"/><path d="M827.0 82.17h4" stroke="#7a7f86"/><path d="M824.0 84.15h4" stroke="#47c8ad"/><path d="M828.0 84.15h1" stroke="#ffd700"/><path d="M826.0 86.12h9" stroke="#f3a15a"/><path d="M835.0 86.12h1" stroke="#bdbdbd"/><path d="M837.0 86.12h1" stroke="#bdbdbd"/><path d="M838.0 86.12h1" stroke="#bdbdbd"/><path d="M826.0 88.10h5" stroke="#f3a15a"/><path d="M831.0 88.10h1" stroke="#bdbdbd"/><path d="M833.0 88.10h22" stroke="#47c8ad"/><path d="M855.0 88.10h1" stroke="#ffd700"/><path d="M828.0 90.07h12" stroke="#f3a15a"/><path d="M840.0 90.07h1" stroke="#bdbdbd"/><path d="M842.0 90.07h12" stroke="#47c8ad"/><path d="M854.0 90.07h1" stroke="#bdbdbd"/><path d="M855.0 90.07h8" stroke="#bdbdbd"/><path d="M863.0 90.07h1" stroke="#ffd700"/><path d="M864.0 90.07h1" stroke="#bdbdbd"/><path d="M865.0 90.07h1" stroke="#bdbdbd"/><path d="M866.0 90.07h1" stroke="#ffd700"/><path d="M867.0 90.07h1" stroke="#bdbdbd"/><path d="M826.0 92.05h1" stroke="#bdbdbd"/><path d="M827.0 92.05h1" stroke="#bdbdbd"/><path d="M826.0 94.02h5" stroke="#f3a15a"/><path d="M831.0 94.02h1" stroke="#bdbdbd"/><path d="M833.0 94.02h7" stroke="#47c8ad"/><path d="M840.0 94.02h1" stroke="#ffd700"/><path d="M828.0 96.00h7" stroke="#f3a15a"/><path d="M835.0 96.00h1" stroke="#bdbdbd"/><path d="M837.0 96.00h5" stroke="#f7765c"/><path d="M843.0 96.00h10" stroke="#47c8ad"/><path d="M853.0 96.00h1" stroke="#bdbdbd"/><path d="M854.0 96.00h3" stroke="#bdbdbd"/><path d="M857.0 96.00h1" stroke="#ffd700"/><path d="M858.0 96.00h1" stroke="#bdbdbd"/><path d="M859.0 96.00h1" stroke="#bdbdbd"/><path d="M860.0 96.00h1" stroke="#ffd700"/><path d="M861.0 96.00h1" stroke="#bdbdbd"/><path d="M828.0 97.97h5" stroke="#f3a15a"/><path d="M833.0 97.97h1" stroke="#bdbdbd"/><path d="M835.0 97.97h4" stroke="#47c8ad"/><path d="M839.0 97.97h1" stroke="#ffd700"/><path d="M830.0 99.95h3" stroke="#f3a15a"/><path d="M833.0 99.95h1" stroke="#bdbdbd"/><path d="M835.0 99.95h8" stroke="#bdbdbd"/><path d="M843.0 99.95h1" stroke="#bdbdbd"/><path d="M830.0 101.92h5" stroke="#f3a15a"/><path d="M835.0 101.92h1" stroke="#bdbdbd"/><path d="M837.0 101.92h6" stroke="#47c8ad"/><path d="M843.0 101.92h1" stroke="#ffd700"/><path d="M832.0 103.90h12" stroke="#f3a15a"/><path d="M844.0 103.90h1" stroke="#bdbdbd"/><path d="M846.0 103.90h12" stroke="#47c8ad"/><path d="M858.0 103.90h1" stroke="#bdbdbd"/><path d="M859.0 103.90h3" stroke="#bdbdbd"/><path d="M862.0 103.90h1" stroke="#bdbdbd"/><path d="M832.0 105.88h8" stroke="#f3a15a"/><path d="M840.0 105.88h1" stroke="#bdbdbd"/><path d="M842.0 105.88h1" stroke="#ffd700"/><path d="M834.0 107.85h5" stroke="#47c8ad"/><path d="M839.0 107.85h1" stroke="#ffd700"/><path d="M836.0 109.82h9" stroke="#f3a15a"/><path d="M845.0 109.82h1" stroke="#bdbdbd"/><path d="M847.0 109.82h9" stroke="#47c8ad"/><path d="M856.0 109.82h1" stroke="#bdbdbd"/><path d="M857.0 109.82h10" stroke="#bdbdbd"/><path d="M867.0 109.82h1" stroke="#bdbdbd"/><path d="M836.0 111.80h5" stroke="#f3a15a"/><path d="M841.0 111.80h1" stroke="#bdbdbd"/><path d="M843.0 111.80h4" stroke="#47c8ad"/><path d="M847.0 111.80h1" stroke="#ffd700"/><path d="M838.0 113.77h7" stroke="#bdbdbd"/><path d="M846.0 113.77h1" stroke="#bdbdbd"/><path d="M848.0 113.77h4" stroke="#a5d6ff"/><path d="M853.0 113.77h3" stroke="#a5d6ff"/><path d="M857.0 113.77h1" stroke="#bdbdbd"/><path d="M859.0 113.77h7" stroke="#a5d6ff"/><path d="M867.0 113.77h8" stroke="#a5d6ff"/><path d="M875.0 113.77h1" stroke="#bdbdbd"/><path d="M838.0 115.75h5" stroke="#f3a15a"/><path d="M843.0 115.75h1" stroke="#bdbdbd"/><path d="M845.0 115.75h9" stroke="#47c8ad"/><path d="M854.0 115.75h1" stroke="#ffd700"/><path d="M840.0 117.72h8" stroke="#f3a15a"/><path d="M848.0 117.72h1" stroke="#bdbdbd"/><path d="M850.0 117.72h1" stroke="#bdbdbd"/><path d="M851.0 117.72h1" stroke="#bdbdbd"/><path d="M852.0 117.72h1" stroke="#bdbdbd"/><path d="M840.0 119.70h5" stroke="#f3a15a"/><path d="M845.0 119.70h1" stroke="#bdbdbd"/><path d="M847.0 119.70h6" stroke="#47c8ad"/><path d="M853.0 119.70h1" stroke="#bdbdbd"/><path d="M854.0 119.70h4" stroke="#bdbdbd"/><path d="M858.0 119.70h1" stroke="#ffd700"/><path d="M859.0 119.70h1" stroke="#bdbdbd"/><path d="M860.0 119.70h1" stroke="#bdbdbd"/><path d="M861.0 119.70h1" stroke="#bdbdbd"/><path d="M862.0 119.70h1" stroke="#ffd700"/><path d="M863.0 119.70h1" stroke="#bdbdbd"/><path d="M840.0 121.67h10" stroke="#f3a15a"/><path d="M850.0 121.67h1" stroke="#bdbdbd"/><path d="M852.0 121.67h10" stroke="#47c8ad"/><path d="M862.0 121.67h1" stroke="#bdbdbd"/><path d="M863.0 121.67h4" stroke="#bdbdbd"/><path d="M867.0 121.67h1" stroke="#bdbdbd"/><path d="M838.0 123.65h1" stroke="#bdbdbd"/><path d="M839.0 123.65h1" stroke="#bdbdbd"/><path d="M836.0 125.62h1" stroke="#bdbdbd"/><path d="M837.0 125.62h1" stroke="#bdbdbd"/><path d="M834.0 127.60h1" stroke="#bdbdbd"/><path d="M835.0 127.60h1" stroke="#bdbdbd"/><path d="M834.0 129.58h5" stroke="#f7765c"/><path d="M840.0 129.58h8" stroke="#47c8ad"/><path d="M848.0 129.58h1" stroke="#ffd700"/><path d="M849.0 129.58h6" stroke="#f3a15a"/><path d="M855.0 129.58h1" stroke="#bdbdbd"/><path d="M857.0 129.58h1" stroke="#bdbdbd"/><path d="M858.0 129.58h1" stroke="#bdbdbd"/><path d="M859.0 129.58h1" stroke="#ffd700"/><path d="M860.0 129.58h1" stroke="#bdbdbd"/><path d="M834.0 133.53h2" stroke="#7a7f86"/><path d="M837.0 133.53h5" stroke="#7a7f86"/><path d="M834.0 135.50h13" stroke="#47c8ad"/><path d="M847.0 135.50h1" stroke="#ffd700"/><path d="M836.0 137.47h10" stroke="#f3a15a"/><path d="M846.0 137.47h1" stroke="#bdbdbd"/><path d="M848.0 137.47h15" stroke="#bdbdbd"/><path d="M863.0 137.47h1" stroke="#bdbdbd"/><path d="M836.0 139.45h12" stroke="#f3a15a"/><path d="M848.0 139.45h1" stroke="#bdbdbd"/><path d="M850.0 139.45h13" stroke="#47c8ad"/><path d="M863.0 139.45h1" stroke="#bdbdbd"/><path d="M864.0 139.45h12" stroke="#bdbdbd"/><path d="M876.0 139.45h1" stroke="#bdbdbd"/><path d="M836.0 141.42h10" stroke="#f3a15a"/><path d="M846.0 141.42h1" stroke="#bdbdbd"/><path d="M848.0 141.42h15" stroke="#47c8ad"/><path d="M863.0 141.42h1" stroke="#ffd700"/><path d="M838.0 143.40h9" stroke="#f3a15a"/><path d="M847.0 143.40h1" stroke="#bdbdbd"/><path d="M849.0 143.40h7" stroke="#a5d6ff"/><path d="M856.0 143.40h1" stroke="#bdbdbd"/><path d="M838.0 145.38h10" stroke="#f3a15a"/><path d="M848.0 145.38h1" stroke="#bdbdbd"/><path d="M850.0 145.38h5" stroke="#f7765c"/><path d="M856.0 145.38h4" stroke="#47c8ad"/><path d="M860.0 145.38h1" stroke="#ffd700"/><path d="M861.0 145.38h5" stroke="#47c8ad"/><path d="M866.0 145.38h1" stroke="#bdbdbd"/><path d="M867.0 145.38h5" stroke="#bdbdbd"/><path d="M872.0 145.38h1" stroke="#ffd700"/><path d="M873.0 145.38h1" stroke="#bdbdbd"/><path d="M838.0 147.35h6" stroke="#f3a15a"/><path d="M844.0 147.35h1" stroke="#bdbdbd"/><path d="M846.0 147.35h18" stroke="#47c8ad"/><path d="M864.0 147.35h1" stroke="#ffd700"/><path d="M840.0 149.33h12" stroke="#f3a15a"/><path d="M852.0 149.33h1" stroke="#bdbdbd"/><path d="M854.0 149.33h12" stroke="#47c8ad"/><path d="M866.0 149.33h1" stroke="#bdbdbd"/><path d="M867.0 149.33h8" stroke="#bdbdbd"/><path d="M875.0 149.33h1" stroke="#ffd700"/><path d="M876.0 149.33h1" stroke="#bdbdbd"/><path d="M877.0 149.33h1" stroke="#bdbdbd"/><path d="M878.0 149.33h1" stroke="#ffd700"/><path d="M879.0 149.33h1" stroke="#bdbdbd"/><path d="M838.0 151.30h1" stroke="#bdbdbd"/><path d="M839.0 151.30h1" stroke="#bdbdbd"/><path d="M836.0 153.28h1" stroke="#bdbdbd"/><path d="M837.0 153.28h1" stroke="#bdbdbd"/><path d="M836.0 155.25h9" stroke="#f3a15a"/><path d="M845.0 155.25h1" stroke="#bdbdbd"/><path d="M847.0 155.25h1" stroke="#ffd700"/><path d="M848.0 155.25h5" stroke="#bdbdbd"/><path d="M853.0 155.25h1" stroke="#ffd700"/><path d="M855.0 155.25h1" stroke="#ffd700"/><path d="M838.0 157.22h2" stroke="#f7765c"/><path d="M841.0 157.22h1" stroke="#ffd700"/><path d="M842.0 157.22h5" stroke="#bdbdbd"/><path d="M848.0 157.22h1" stroke="#bdbdbd"/><path d="M849.0 157.22h1" stroke="#bdbdbd"/><path d="M851.0 157.22h4" stroke="#67a8e6"/><path d="M856.0 157.22h1" stroke="#bdbdbd"/><path d="M857.0 157.22h1" stroke="#bdbdbd"/><path d="M859.0 157.22h5" stroke="#bdbdbd"/><path d="M864.0 157.22h1" stroke="#bdbdbd"/><path d="M865.0 157.22h7" stroke="#bdbdbd"/><path d="M872.0 157.22h1" stroke="#ffd700"/><path d="M874.0 157.22h1" stroke="#ffd700"/><path d="M840.0 159.20h6" stroke="#f7765c"/><path d="M847.0 159.20h6" stroke="#a5d6ff"/><path d="M854.0 159.20h2" stroke="#a5d6ff"/><path d="M857.0 159.20h9" stroke="#a5d6ff"/><path d="M866.0 159.20h1" stroke="#bdbdbd"/><path d="M838.0 161.17h1" stroke="#bdbdbd"/><path d="M838.0 163.15h2" stroke="#f7765c"/><path d="M841.0 163.15h1" stroke="#ffd700"/><path d="M842.0 163.15h1" stroke="#bdbdbd"/><path d="M843.0 163.15h5" stroke="#bdbdbd"/><path d="M848.0 163.15h1" stroke="#bdbdbd"/><path d="M849.0 163.15h8" stroke="#bdbdbd"/><path d="M857.0 163.15h1" stroke="#ffd700"/><path d="M858.0 163.15h3" stroke="#a5d6ff"/><path d="M861.0 163.15h1" stroke="#ffd700"/><path d="M862.0 163.15h1" stroke="#ffd700"/><path d="M864.0 163.15h1" stroke="#ffd700"/><path d="M840.0 165.13h6" stroke="#f7765c"/><path d="M847.0 165.13h6" stroke="#a5d6ff"/><path d="M854.0 165.13h5" stroke="#a5d6ff"/><path d="M860.0 165.13h6" stroke="#a5d6ff"/><path d="M866.0 165.13h1" stroke="#bdbdbd"/><path d="M838.0 167.10h1" stroke="#bdbdbd"/><path d="M838.0 169.08h6" stroke="#f7765c"/><path d="M845.0 169.08h4" stroke="#67a8e6"/><path d="M849.0 169.08h1" stroke="#bdbdbd"/><path d="M836.0 171.05h1" stroke="#bdbdbd"/><path d="M837.0 171.05h1" stroke="#bdbdbd"/><path d="M834.0 173.03h1" stroke="#bdbdbd"/><path d="M835.0 173.03h1" stroke="#bdbdbd"/><path d="M834.0 175.00h5" stroke="#f7765c"/><path d="M840.0 175.00h8" stroke="#47c8ad"/><path d="M848.0 175.00h1" stroke="#ffd700"/><path d="M849.0 175.00h6" stroke="#f3a15a"/><path d="M855.0 175.00h1" stroke="#bdbdbd"/><path d="M857.0 175.00h1" stroke="#bdbdbd"/><path d="M858.0 175.00h1" stroke="#bdbdbd"/><path d="M859.0 175.00h1" stroke="#ffd700"/><path d="M860.0 175.00h1" stroke="#bdbdbd"/><path d="M834.0 178.95h2" stroke="#7a7f86"/><path d="M837.0 178.95h8" stroke="#7a7f86"/><path d="M834.0 180.92h13" stroke="#47c8ad"/><path d="M847.0 180.92h1" stroke="#ffd700"/><path d="M836.0 182.90h10" stroke="#f3a15a"/><path d="M846.0 182.90h1" stroke="#bdbdbd"/><path d="M848.0 182.90h18" stroke="#bdbdbd"/><path d="M866.0 182.90h1" stroke="#bdbdbd"/><path d="M836.0 184.88h11" stroke="#f3a15a"/><path d="M847.0 184.88h1" stroke="#bdbdbd"/><path d="M849.0 184.88h4" stroke="#67a8e6"/><path d="M853.0 184.88h1" stroke="#bdbdbd"/><path d="M836.0 186.85h10" stroke="#f3a15a"/><path d="M846.0 186.85h1" stroke="#bdbdbd"/><path d="M848.0 186.85h15" stroke="#47c8ad"/><path d="M863.0 186.85h1" stroke="#ffd700"/><path d="M838.0 188.83h9" stroke="#f3a15a"/><path d="M847.0 188.83h1" stroke="#bdbdbd"/><path d="M849.0 188.83h10" stroke="#a5d6ff"/><path d="M859.0 188.83h1" stroke="#bdbdbd"/><path d="M838.0 190.80h10" stroke="#f3a15a"/><path d="M848.0 190.80h1" stroke="#bdbdbd"/><path d="M850.0 190.80h5" stroke="#f7765c"/><path d="M856.0 190.80h4" stroke="#47c8ad"/><path d="M860.0 190.80h1" stroke="#ffd700"/><path d="M861.0 190.80h5" stroke="#47c8ad"/><path d="M866.0 190.80h1" stroke="#bdbdbd"/><path d="M867.0 190.80h4" stroke="#bdbdbd"/><path d="M871.0 190.80h1" stroke="#ffd700"/><path d="M872.0 190.80h1" stroke="#bdbdbd"/><path d="M838.0 192.78h6" stroke="#f3a15a"/><path d="M844.0 192.78h1" stroke="#bdbdbd"/><path d="M846.0 192.78h18" stroke="#47c8ad"/><path d="M864.0 192.78h1" stroke="#ffd700"/><path d="M840.0 194.75h12" stroke="#f3a15a"/><path d="M852.0 194.75h1" stroke="#bdbdbd"/><path d="M854.0 194.75h12" stroke="#47c8ad"/><path d="M866.0 194.75h1" stroke="#bdbdbd"/><path d="M867.0 194.75h8" stroke="#bdbdbd"/><path d="M875.0 194.75h1" stroke="#ffd700"/><path d="M876.0 194.75h1" stroke="#bdbdbd"/><path d="M877.0 194.75h1" stroke="#bdbdbd"/><path d="M878.0 194.75h1" stroke="#ffd700"/><path d="M879.0 194.75h1" stroke="#bdbdbd"/><path d="M838.0 196.72h1" stroke="#bdbdbd"/><path d="M839.0 196.72h1" stroke="#bdbdbd"/><path d="M836.0 198.70h1" stroke="#bdbdbd"/><path d="M837.0 198.70h1" stroke="#bdbdbd"/><path d="M836.0 200.68h9" stroke="#f3a15a"/><path d="M845.0 200.68h1" stroke="#bdbdbd"/><path d="M847.0 200.68h1" stroke="#ffd700"/><path d="M848.0 200.68h5" stroke="#bdbdbd"/><path d="M853.0 200.68h1" stroke="#ffd700"/><path d="M855.0 200.68h1" stroke="#ffd700"/><path d="M838.0 202.65h2" stroke="#f7765c"/><path d="M841.0 202.65h1" stroke="#ffd700"/><path d="M842.0 202.65h5" stroke="#bdbdbd"/><path d="M848.0 202.65h1" stroke="#bdbdbd"/><path d="M849.0 202.65h1" stroke="#bdbdbd"/><path d="M851.0 202.65h4" stroke="#67a8e6"/><path d="M856.0 202.65h1" stroke="#bdbdbd"/><path d="M857.0 202.65h1" stroke="#bdbdbd"/><path d="M859.0 202.65h5" stroke="#bdbdbd"/><path d="M864.0 202.65h1" stroke="#bdbdbd"/><path d="M865.0 202.65h6" stroke="#bdbdbd"/><path d="M872.0 202.65h1" stroke="#bdbdbd"/><path d="M874.0 202.65h1" stroke="#bdbdbd"/><path d="M875.0 202.65h1" stroke="#ffd700"/><path d="M877.0 202.65h1" stroke="#ffd700"/><path d="M840.0 204.63h6" stroke="#f7765c"/><path d="M847.0 204.63h9" stroke="#a5d6ff"/><path d="M857.0 204.63h4" stroke="#a5d6ff"/><path d="M862.0 204.63h2" stroke="#a5d6ff"/><path d="M865.0 204.63h2" stroke="#a5d6ff"/><path d="M868.0 204.63h5" stroke="#a5d6ff"/><path d="M874.0 204.63h1" stroke="#a5d6ff"/><path d="M876.0 204.63h11" stroke="#a5d6ff"/><path d="M887.0 204.63h1" stroke="#bdbdbd"/><path d="M838.0 206.60h1" stroke="#bdbdbd"/><path d="M838.0 208.58h6" stroke="#f7765c"/><path d="M845.0 208.58h4" stroke="#67a8e6"/><path d="M849.0 208.58h1" stroke="#bdbdbd"/><path d="M836.0 210.55h1" stroke="#bdbdbd"/><path d="M837.0 210.55h1" stroke="#bdbdbd"/><path d="M834.0 212.53h1" stroke="#bdbdbd"/><path d="M835.0 212.53h1" stroke="#bdbdbd"/><path d="M834.0 214.50h5" stroke="#f7765c"/><path d="M840.0 214.50h8" stroke="#47c8ad"/><path d="M848.0 214.50h1" stroke="#ffd700"/><path d="M849.0 214.50h6" stroke="#f3a15a"/><path d="M855.0 214.50h1" stroke="#bdbdbd"/><path d="M857.0 214.50h1" stroke="#bdbdbd"/><path d="M858.0 214.50h1" stroke="#bdbdbd"/><path d="M859.0 214.50h1" stroke="#ffd700"/><path d="M860.0 214.50h1" stroke="#bdbdbd"/><path d="M834.0 218.45h2" stroke="#7a7f86"/><path d="M837.0 218.45h6" stroke="#7a7f86"/><path d="M834.0 220.43h8" stroke="#47c8ad"/><path d="M842.0 220.43h1" stroke="#ffd700"/><path d="M836.0 222.40h5" stroke="#f3a15a"/><path d="M841.0 222.40h1" stroke="#bdbdbd"/><path d="M843.0 222.40h6" stroke="#f7765c"/><path d="M849.0 222.40h1" stroke="#bdbdbd"/><path d="M850.0 222.40h8" stroke="#bdbdbd"/><path d="M858.0 222.40h1" stroke="#bdbdbd"/><path d="M836.0 224.38h5" stroke="#f3a15a"/><path d="M841.0 224.38h1" stroke="#bdbdbd"/><path d="M843.0 224.38h14" stroke="#47c8ad"/><path d="M857.0 224.38h1" stroke="#ffd700"/><path d="M838.0 226.35h9" stroke="#f3a15a"/><path d="M847.0 226.35h1" stroke="#bdbdbd"/><path d="M849.0 226.35h1" stroke="#ffd700"/><path d="M850.0 226.35h1" stroke="#ffd700"/><path d="M852.0 226.35h5" stroke="#f7765c"/><path d="M858.0 226.35h1" stroke="#ffd700"/><path d="M840.0 228.33h2" stroke="#f7765c"/><path d="M843.0 228.33h1" stroke="#ffd700"/><path d="M844.0 228.33h8" stroke="#bdbdbd"/><path d="M852.0 228.33h1" stroke="#bdbdbd"/><path d="M853.0 228.33h12" stroke="#bdbdbd"/><path d="M865.0 228.33h1" stroke="#bdbdbd"/><path d="M866.0 228.33h1" stroke="#bdbdbd"/><path d="M867.0 228.33h8" stroke="#bdbdbd"/><path d="M875.0 228.33h1" stroke="#ffd700"/><path d="M876.0 228.33h1" stroke="#ffd700"/><path d="M877.0 228.33h1" stroke="#ffd700"/><path d="M879.0 228.33h1" stroke="#ffd700"/><path d="M842.0 230.30h5" stroke="#f7765c"/><path d="M848.0 230.30h5" stroke="#bdbdbd"/><path d="M854.0 230.30h1" stroke="#bdbdbd"/><path d="M856.0 230.30h15" stroke="#bdbdbd"/><path d="M871.0 230.30h1" stroke="#bdbdbd"/><path d="M872.0 230.30h4" stroke="#bdbdbd"/><path d="M876.0 230.30h1" stroke="#bdbdbd"/><path d="M877.0 230.30h4" stroke="#bdbdbd"/><path d="M881.0 230.30h1" stroke="#ffd700"/><path d="M882.0 230.30h1" stroke="#ffd700"/><path d="M883.0 230.30h1" stroke="#bdbdbd"/><path d="M842.0 232.28h5" stroke="#f7765c"/><path d="M848.0 232.28h8" stroke="#bdbdbd"/><path d="M857.0 232.28h1" stroke="#bdbdbd"/><path d="M859.0 232.28h18" stroke="#bdbdbd"/><path d="M877.0 232.28h1" stroke="#bdbdbd"/><path d="M878.0 232.28h4" stroke="#bdbdbd"/><path d="M882.0 232.28h1" stroke="#bdbdbd"/><path d="M842.0 234.25h2" stroke="#f7765c"/><path d="M845.0 234.25h1" stroke="#ffd700"/><path d="M846.0 234.25h7" stroke="#bdbdbd"/><path d="M853.0 234.25h1" stroke="#ffd700"/><path d="M855.0 234.25h1" stroke="#ffd700"/><path d="M844.0 236.22h5" stroke="#bdbdbd"/><path d="M850.0 236.22h12" stroke="#47c8ad"/><path d="M862.0 236.22h1" stroke="#ffd700"/><path d="M863.0 236.22h1" stroke="#ffd700"/><path d="M864.0 236.22h1" stroke="#bdbdbd"/><path d="M865.0 236.22h5" stroke="#bdbdbd"/><path d="M870.0 236.22h1" stroke="#ffd700"/><path d="M846.0 238.20h5" stroke="#f3a15a"/><path d="M851.0 238.20h1" stroke="#bdbdbd"/><path d="M853.0 238.20h5" stroke="#bdbdbd"/><path d="M858.0 238.20h1" stroke="#bdbdbd"/><path d="M846.0 240.18h8" stroke="#f3a15a"/><path d="M854.0 240.18h1" stroke="#bdbdbd"/><path d="M856.0 240.18h8" stroke="#bdbdbd"/><path d="M864.0 240.18h1" stroke="#bdbdbd"/><path d="M844.0 242.15h1" stroke="#bdbdbd"/><path d="M845.0 242.15h1" stroke="#bdbdbd"/><path d="M842.0 244.13h1" stroke="#ffd700"/><path d="M844.0 244.13h4" stroke="#bdbdbd"/><path d="M849.0 244.13h1" stroke="#ffd700"/><path d="M844.0 246.10h5" stroke="#bdbdbd"/><path d="M850.0 246.10h12" stroke="#47c8ad"/><path d="M862.0 246.10h1" stroke="#ffd700"/><path d="M863.0 246.10h1" stroke="#ffd700"/><path d="M864.0 246.10h1" stroke="#bdbdbd"/><path d="M865.0 246.10h8" stroke="#bdbdbd"/><path d="M873.0 246.10h1" stroke="#ffd700"/><path d="M846.0 248.08h5" stroke="#f3a15a"/><path d="M851.0 248.08h1" stroke="#bdbdbd"/><path d="M853.0 248.08h5" stroke="#bdbdbd"/><path d="M858.0 248.08h1" stroke="#bdbdbd"/><path d="M846.0 250.05h8" stroke="#f3a15a"/><path d="M854.0 250.05h1" stroke="#bdbdbd"/><path d="M856.0 250.05h8" stroke="#bdbdbd"/><path d="M864.0 250.05h1" stroke="#bdbdbd"/><path d="M844.0 252.03h1" stroke="#bdbdbd"/><path d="M845.0 252.03h1" stroke="#bdbdbd"/><path d="M842.0 254.00h1" stroke="#bdbdbd"/><path d="M840.0 255.97h1" stroke="#bdbdbd"/><path d="M838.0 257.95h1" stroke="#bdbdbd"/><path d="M839.0 257.95h1" stroke="#bdbdbd"/><path d="M838.0 259.93h5" stroke="#f3a15a"/><path d="M843.0 259.93h1" stroke="#bdbdbd"/><path d="M845.0 259.93h14" stroke="#47c8ad"/><path d="M859.0 259.93h1" stroke="#bdbdbd"/><path d="M860.0 259.93h9" stroke="#bdbdbd"/><path d="M869.0 259.93h1" stroke="#ffd700"/><path d="M840.0 261.90h15" stroke="#f3a15a"/><path d="M855.0 261.90h1" stroke="#bdbdbd"/><path d="M857.0 261.90h6" stroke="#47c8ad"/><path d="M863.0 261.90h1" stroke="#bdbdbd"/><path d="M864.0 261.90h4" stroke="#bdbdbd"/><path d="M868.0 261.90h1" stroke="#bdbdbd"/><path d="M840.0 263.88h7" stroke="#f3a15a"/><path d="M847.0 263.88h1" stroke="#bdbdbd"/><path d="M849.0 263.88h5" stroke="#f7765c"/><path d="M855.0 263.88h10" stroke="#47c8ad"/><path d="M865.0 263.88h1" stroke="#bdbdbd"/><path d="M866.0 263.88h9" stroke="#bdbdbd"/><path d="M875.0 263.88h1" stroke="#ffd700"/><path d="M876.0 263.88h8" stroke="#f3a15a"/><path d="M884.0 263.88h1" stroke="#bdbdbd"/><path d="M886.0 263.88h1" stroke="#bdbdbd"/><path d="M887.0 263.88h1" stroke="#bdbdbd"/><path d="M888.0 263.88h1" stroke="#ffd700"/><path d="M889.0 263.88h1" stroke="#bdbdbd"/><path d="M840.0 265.85h5" stroke="#f3a15a"/><path d="M845.0 265.85h1" stroke="#bdbdbd"/><path d="M847.0 265.85h22" stroke="#47c8ad"/><path d="M869.0 265.85h1" stroke="#ffd700"/><path d="M842.0 267.83h12" stroke="#f3a15a"/><path d="M854.0 267.83h1" stroke="#bdbdbd"/><path d="M856.0 267.83h12" stroke="#47c8ad"/><path d="M868.0 267.83h1" stroke="#bdbdbd"/><path d="M869.0 267.83h8" stroke="#bdbdbd"/><path d="M877.0 267.83h1" stroke="#ffd700"/><path d="M878.0 267.83h1" stroke="#bdbdbd"/><path d="M879.0 267.83h1" stroke="#bdbdbd"/><path d="M880.0 267.83h1" stroke="#ffd700"/><path d="M881.0 267.83h1" stroke="#bdbdbd"/><path d="M840.0 269.80h1" stroke="#bdbdbd"/><path d="M841.0 269.80h1" stroke="#bdbdbd"/><path d="M838.0 271.78h1" stroke="#bdbdbd"/><path d="M839.0 271.78h1" stroke="#bdbdbd"/><path d="M838.0 273.75h5" stroke="#f3a15a"/><path d="M843.0 273.75h1" stroke="#bdbdbd"/><path d="M845.0 273.75h4" stroke="#47c8ad"/><path d="M849.0 273.75h1" stroke="#ffd700"/><path d="M840.0 275.73h7" stroke="#bdbdbd"/><path d="M848.0 275.73h1" stroke="#bdbdbd"/><path d="M850.0 275.73h4" stroke="#a5d6ff"/><path d="M855.0 275.73h3" stroke="#a5d6ff"/><path d="M859.0 275.73h1" stroke="#bdbdbd"/><path d="M861.0 275.73h7" stroke="#a5d6ff"/><path d="M869.0 275.73h8" stroke="#a5d6ff"/><path d="M877.0 275.73h1" stroke="#bdbdbd"/><path d="M840.0 277.70h5" stroke="#f3a15a"/><path d="M845.0 277.70h1" stroke="#bdbdbd"/><path d="M847.0 277.70h5" stroke="#f7765c"/><path d="M853.0 277.70h9" stroke="#47c8ad"/><path d="M862.0 277.70h1" stroke="#ffd700"/><path d="M863.0 277.70h8" stroke="#f3a15a"/><path d="M871.0 277.70h1" stroke="#bdbdbd"/><path d="M873.0 277.70h1" stroke="#bdbdbd"/><path d="M874.0 277.70h1" stroke="#bdbdbd"/><path d="M875.0 277.70h1" stroke="#bdbdbd"/><path d="M877.0 277.70h5" stroke="#f3a15a"/><path d="M882.0 277.70h1" stroke="#bdbdbd"/><path d="M884.0 277.70h6" stroke="#47c8ad"/><path d="M890.0 277.70h1" stroke="#bdbdbd"/><path d="M891.0 277.70h5" stroke="#bdbdbd"/><path d="M896.0 277.70h1" stroke="#ffd700"/><path d="M897.0 277.70h1" stroke="#bdbdbd"/><path d="M838.0 279.68h1" stroke="#bdbdbd"/><path d="M839.0 279.68h1" stroke="#bdbdbd"/><path d="M836.0 281.65h1" stroke="#bdbdbd"/><path d="M837.0 281.65h1" stroke="#bdbdbd"/><path d="M834.0 283.63h1" stroke="#bdbdbd"/><path d="M835.0 283.63h1" stroke="#bdbdbd"/><path d="M834.0 285.60h5" stroke="#f7765c"/><path d="M840.0 285.60h8" stroke="#47c8ad"/><path d="M848.0 285.60h1" stroke="#ffd700"/><path d="M849.0 285.60h6" stroke="#f3a15a"/><path d="M855.0 285.60h1" stroke="#bdbdbd"/><path d="M857.0 285.60h1" stroke="#bdbdbd"/><path d="M858.0 285.60h1" stroke="#bdbdbd"/><path d="M859.0 285.60h1" stroke="#ffd700"/><path d="M860.0 285.60h1" stroke="#bdbdbd"/><path d="M834.0 287.58h10" stroke="#47c8ad"/><path d="M844.0 287.58h1" stroke="#ffd700"/><path d="M836.0 289.55h9" stroke="#f3a15a"/><path d="M845.0 289.55h1" stroke="#bdbdbd"/><path d="M847.0 289.55h1" stroke="#ffd700"/><path d="M848.0 289.55h1" stroke="#ffd700"/><path d="M850.0 289.55h1" stroke="#ffd700"/><path d="M851.0 289.55h1" stroke="#ffd700"/><path d="M852.0 289.55h1" stroke="#bdbdbd"/><path d="M836.0 291.53h5" stroke="#f3a15a"/><path d="M841.0 291.53h1" stroke="#bdbdbd"/><path d="M843.0 291.53h5" stroke="#f7765c"/><path d="M849.0 291.53h4" stroke="#47c8ad"/><path d="M853.0 291.53h1" stroke="#ffd700"/><path d="M854.0 291.53h7" stroke="#a5d6ff"/><path d="M862.0 291.53h10" stroke="#a5d6ff"/><path d="M872.0 291.53h1" stroke="#ffd700"/><path d="M873.0 291.53h1" stroke="#bdbdbd"/><path d="M834.0 293.50h1" stroke="#bdbdbd"/><path d="M835.0 293.50h1" stroke="#bdbdbd"/><path d="M834.0 295.48h5" stroke="#f7765c"/><path d="M840.0 295.48h8" stroke="#47c8ad"/><path d="M848.0 295.48h1" stroke="#ffd700"/><path d="M849.0 295.48h6" stroke="#f3a15a"/><path d="M855.0 295.48h1" stroke="#bdbdbd"/><path d="M857.0 295.48h1" stroke="#bdbdbd"/><path d="M858.0 295.48h1" stroke="#ffd700"/><path d="M859.0 295.48h1" stroke="#bdbdbd"/><path d="M834.0 299.43h2" stroke="#7a7f86"/><path d="M837.0 299.43h6" stroke="#7a7f86"/><path d="M844.0 299.43h7" stroke="#7a7f86"/><path d="M852.0 299.43h5" stroke="#7a7f86"/><path d="M858.0 299.43h1" stroke="#7a7f86"/><path d="M860.0 299.43h6" stroke="#7a7f86"/><path d="M834.0 301.40h3" stroke="#47c8ad"/><path d="M837.0 301.40h1" stroke="#ffd700"/><path d="M836.0 303.38h17" stroke="#f3a15a"/><path d="M853.0 303.38h1" stroke="#bdbdbd"/><path d="M855.0 303.38h17" stroke="#47c8ad"/><path d="M872.0 303.38h1" stroke="#bdbdbd"/><path d="M873.0 303.38h6" stroke="#bdbdbd"/><path d="M879.0 303.38h1" stroke="#bdbdbd"/><path d="M836.0 305.35h8" stroke="#f3a15a"/><path d="M844.0 305.35h1" stroke="#bdbdbd"/><path d="M846.0 305.35h1" stroke="#ffd700"/><path d="M838.0 307.33h4" stroke="#47c8ad"/><path d="M842.0 307.33h1" stroke="#ffd700"/><path d="M840.0 309.30h7" stroke="#bdbdbd"/><path d="M844.0 311.28h1" stroke="#bdbdbd"/><path d="M846.0 311.28h6" stroke="#a5d6ff"/><path d="M853.0 311.28h4" stroke="#a5d6ff"/><path d="M858.0 311.28h2" stroke="#a5d6ff"/><path d="M861.0 311.28h9" stroke="#a5d6ff"/><path d="M844.0 313.25h1" stroke="#bdbdbd"/><path d="M846.0 313.25h8" stroke="#a5d6ff"/><path d="M855.0 313.25h4" stroke="#a5d6ff"/><path d="M860.0 313.25h2" stroke="#a5d6ff"/><path d="M863.0 313.25h9" stroke="#a5d6ff"/><path d="M872.0 313.25h1" stroke="#bdbdbd"/><path d="M838.0 315.23h1" stroke="#bdbdbd"/><path d="M839.0 315.23h1" stroke="#bdbdbd"/><path d="M838.0 317.20h10" stroke="#47c8ad"/><path d="M848.0 317.20h1" stroke="#ffd700"/><path d="M840.0 319.18h9" stroke="#f3a15a"/><path d="M849.0 319.18h1" stroke="#bdbdbd"/><path d="M851.0 319.18h1" stroke="#ffd700"/><path d="M852.0 319.18h1" stroke="#ffd700"/><path d="M854.0 319.18h1" stroke="#ffd700"/><path d="M842.0 321.15h8" stroke="#bdbdbd"/><path d="M850.0 321.15h1" stroke="#ffd700"/><path d="M851.0 321.15h1" stroke="#ffd700"/><path d="M852.0 321.15h1" stroke="#ffd700"/><path d="M854.0 321.15h1" stroke="#ffd700"/><path d="M844.0 323.13h7" stroke="#bdbdbd"/><path d="M852.0 323.13h1" stroke="#bdbdbd"/><path d="M854.0 323.13h1" stroke="#bdbdbd"/><path d="M855.0 323.13h7" stroke="#bdbdbd"/><path d="M862.0 323.13h1" stroke="#bdbdbd"/><path d="M842.0 325.10h1" stroke="#bdbdbd"/><path d="M843.0 325.10h1" stroke="#bdbdbd"/><path d="M844.0 325.10h1" stroke="#bdbdbd"/><path d="M840.0 327.08h1" stroke="#bdbdbd"/><path d="M841.0 327.08h1" stroke="#bdbdbd"/><path d="M840.0 329.05h5" stroke="#f3a15a"/><path d="M845.0 329.05h1" stroke="#bdbdbd"/><path d="M847.0 329.05h4" stroke="#47c8ad"/><path d="M851.0 329.05h1" stroke="#ffd700"/><path d="M842.0 331.03h7" stroke="#bdbdbd"/><path d="M850.0 331.03h1" stroke="#bdbdbd"/><path d="M852.0 331.03h7" stroke="#a5d6ff"/><path d="M860.0 331.03h8" stroke="#a5d6ff"/><path d="M869.0 331.03h1" stroke="#bdbdbd"/><path d="M871.0 331.03h4" stroke="#a5d6ff"/><path d="M876.0 331.03h3" stroke="#a5d6ff"/><path d="M879.0 331.03h1" stroke="#bdbdbd"/><path d="M842.0 333.00h5" stroke="#f3a15a"/><path d="M847.0 333.00h1" stroke="#bdbdbd"/><path d="M849.0 333.00h9" stroke="#47c8ad"/><path d="M858.0 333.00h1" stroke="#ffd700"/><path d="M844.0 334.98h5" stroke="#f3a15a"/><path d="M849.0 334.98h1" stroke="#bdbdbd"/><path d="M851.0 334.98h6" stroke="#47c8ad"/><path d="M857.0 334.98h1" stroke="#bdbdbd"/><path d="M858.0 334.98h4" stroke="#bdbdbd"/><path d="M862.0 334.98h1" stroke="#bdbdbd"/><path d="M844.0 336.95h10" stroke="#f3a15a"/><path d="M854.0 336.95h1" stroke="#bdbdbd"/><path d="M856.0 336.95h10" stroke="#47c8ad"/><path d="M866.0 336.95h1" stroke="#bdbdbd"/><path d="M867.0 336.95h4" stroke="#bdbdbd"/><path d="M871.0 336.95h1" stroke="#bdbdbd"/><path d="M842.0 338.93h1" stroke="#bdbdbd"/><path d="M843.0 338.93h1" stroke="#bdbdbd"/><path d="M840.0 340.90h1" stroke="#bdbdbd"/><path d="M841.0 340.90h1" stroke="#bdbdbd"/><path d="M838.0 342.88h1" stroke="#bdbdbd"/><path d="M839.0 342.88h1" stroke="#bdbdbd"/><path d="M836.0 344.85h1" stroke="#bdbdbd"/><path d="M837.0 344.85h1" stroke="#bdbdbd"/><path d="M834.0 346.83h1" stroke="#bdbdbd"/><path d="M835.0 346.83h1" stroke="#bdbdbd"/><path d="M832.0 348.80h1" stroke="#bdbdbd"/><path d="M833.0 348.80h1" stroke="#bdbdbd"/><path d="M830.0 350.78h1" stroke="#bdbdbd"/><path d="M831.0 350.78h1" stroke="#bdbdbd"/><path d="M828.0 352.75h1" stroke="#bdbdbd"/><path d="M829.0 352.75h1" stroke="#bdbdbd"/><path d="M826.0 354.73h1" stroke="#bdbdbd"/><path d="M827.0 354.73h1" stroke="#bdbdbd"/><path d="M824.0 356.70h1" stroke="#bdbdbd"/><path d="M825.0 356.70h1" stroke="#bdbdbd"/><path d="M822.0 358.68h1" stroke="#bdbdbd"/><path d="M823.0 358.68h1" stroke="#bdbdbd"/><path d="M820.0 360.65h1" stroke="#bdbdbd"/><path d="M821.0 360.65h1" stroke="#bdbdbd"/><path d="M818.0 362.63h1" stroke="#bdbdbd"/><path d="M819.0 362.63h1" stroke="#bdbdbd"/><path d="M816.0 364.60h1" stroke="#bdbdbd"/><path d="M817.0 364.60h1" stroke="#bdbdbd"/><path d="M814.0 366.58h1" stroke="#bdbdbd"/><path d="M815.0 366.58h1" stroke="#bdbdbd"/><path d="M812.0 368.55h1" stroke="#bdbdbd"/><path d="M813.0 368.55h1" stroke="#bdbdbd"/><path d="M810.0 370.53h1" stroke="#bdbdbd"/><path d="M808.0 372.50h1" stroke="#bdbdbd"/></g></svg>
<div class="a" style="left:887px;top:0;width:11px;height:63px;border-left:1px solid #3a3b3f;background:#17181b"></div>
<div class="a" style="left:888px;top:62.5px;width:11px;height:2px;background:#6a6a6a"></div>
</div>
<div class="a" style="left:786px;top:58px;width:194px;height:25px;background:#1c1d20;border:1px solid #303135;border-radius:7px;box-shadow:0 1px 4px rgba(0,0,0,0.5)"><svg style="left:6px;top:6px" width="190" height="14" viewBox="0 0 190 14" fill="none" stroke-width="1.3"><g fill="#6a6a6a" stroke="none"><circle cx="2.5" cy="2.5" r="1"/><circle cx="6.5" cy="2.5" r="1"/><circle cx="2.5" cy="6.5" r="1"/><circle cx="6.5" cy="6.5" r="1"/><circle cx="2.5" cy="10.5" r="1"/><circle cx="6.5" cy="10.5" r="1"/></g><path d="M18 2.5 V11.5 M23.5 2.5 V11.5" stroke="#8a8a8a" stroke-width="1.2"/><path d="M38 7 Q40 2 45 3 M43 1 L46 3.5 L43 6" stroke="#7a7a7a"/><circle cx="42.5" cy="11" r="1.5" fill="#7a7a7a" stroke="none"/><path d="M64 1 V8 M61 5 L64 8 L67 5" stroke="#7a7a7a"/><circle cx="64" cy="11.5" r="1.5" fill="#7a7a7a" stroke="none"/><path d="M86 9 V1.5 M83 4.5 L86 1.5 L89 4.5" stroke="#7a7a7a"/><circle cx="86" cy="11.5" r="1.5" fill="#7a7a7a" stroke="none"/><path d="M109 0.5 L104.5 7.5 H107.5 L105.5 13.5 L110.5 5.5 H107.5 Z" fill="#f5a623" stroke="none"/><path d="M126.5 3.2 A5 5 0 1 0 130.3 1.9" stroke="#73c991" stroke-width="1.5"/><path d="M124.2 0.8 L128.6 1 L126.6 5Z" fill="#73c991" stroke="none"/><rect x="147" y="1.5" width="10.5" height="10.5" rx="1.2" stroke="#f48771"/><path d="M168 4 V1.5 H170.5 M175.5 1.5 H178 V4 M168 9.5 V12 H170.5 M175.5 12 H178 V9.5" stroke="#4fa5e0" stroke-width="1.1"/><circle cx="172.7" cy="6.2" r="2" stroke="#4fa5e0" stroke-width="1.1"/><path d="M174.2 7.7 L176 9.5" stroke="#4fa5e0" stroke-width="1.1"/></svg></div>
<div id="status" class="a">
<svg style="left:10px;top:3px" width="11" height="11" fill="none" stroke="#9a9a9a" stroke-width="1.1"><path d="M0.8 4 L4 7 L0.8 10 M10.2 0.8 L7 3.8 L10.2 6.8"/></svg>
<svg style="left:36px;top:3px" width="11" height="11" fill="none" stroke="#9a9a9a" stroke-width="1"><circle cx="5.5" cy="5.5" r="5"/><path d="M3.5 3.5 L7.5 7.5 M7.5 3.5 L3.5 7.5"/></svg>
<div class="st" style="left:51px">1</div>
<svg style="left:60px;top:3px" width="13" height="11" fill="none" stroke="#9a9a9a" stroke-width="1"><path d="M6.5 0.8 L12.5 10.5 H0.5Z M6.5 4 V7.5 M6.5 8.5 V9.5"/></svg>
<div class="st" style="left:75px">1</div>
<svg style="left:84px;top:3px" width="11" height="11" fill="none" stroke="#9a9a9a" stroke-width="1"><circle cx="5.5" cy="5.5" r="5"/><path d="M5.5 4.5 V8.5 M5.5 2.5 V3.5"/></svg>
<div class="st" style="left:99px">5</div>
<svg style="left:118px;top:3px" width="13" height="12" fill="none" stroke="#9a9a9a" stroke-width="1"><path d="M3 1 L12 5.5 L6 9"/><rect x="1.5" y="7" width="4" height="4"/></svg>
<div class="st" style="left:145px">Debug my code</div>
<svg style="left:230px;top:2px" width="13" height="13" fill="none" stroke="#9a9a9a" stroke-width="1"><path d="M1.5 5 H9.5 V9 Q9.5 12 5.5 12 Q1.5 12 1.5 9Z M9.5 6 Q12 6 12 7.5 Q12 9 9.5 9 M3 1 L4 3 M5.5 1 L6.5 3 M8 1 L9 3"/></svg>
<div class="st" style="left:245px">Java: Warning</div>
<div class="a" style="left:320px;top:5px;width:7px;height:7px;border-radius:4px;background:#3a86c8"></div>
<div class="st" style="left:334px">Update is ready, click to restart.</div>
<div class="a" style="left:480px;top:-1px;width:26px;height:18px;background:#2f86c8"></div>
<svg style="left:486px;top:2px" width="14" height="13" fill="none" stroke="#ffffff" stroke-width="1.3"><circle cx="6" cy="5.5" r="4.5"/><path d="M3.8 5.5 H8.2 M9.3 8.8 L12.5 12"/></svg>
<div class="st" style="left:513px">Ln 23, Col 40</div>
<div class="st" style="left:583px">Spaces: 2</div>
<div class="st" style="left:637px">UTF-8</div>
<div class="st" style="left:676px">CRLF</div>
<div class="st" style="left:712px">{ }</div>
<div class="st" style="left:730px">Dart</div>
<svg style="left:763px;top:2px" width="14" height="13" fill="none" stroke="#9a9a9a" stroke-width="1.1"><path d="M2 5 Q1 1 4.5 1.5 Q6.5 2 7 4 Q7.5 2 9.5 1.5 Q13 1 12 5 Q13.5 6 13 9 Q11 12 7 12 Q3 12 1 9 Q0.5 6 2 5Z"/><path d="M5 7 V9 M9 7 V9"/></svg>
<svg style="left:789px;top:3px" width="14" height="11" fill="none" stroke="#9a9a9a" stroke-width="1"><path d="M3 1 Q0.5 5.5 3 10 M11 1 Q13.5 5.5 11 10 M5 3 Q3.5 5.5 5 8 M9 3 Q10.5 5.5 9 8"/><circle cx="7" cy="5.5" r="0.8" fill="#9a9a9a"/></svg>
<div class="st" style="left:806px">Go Live</div>
<div class="st" style="left:851px">Pixel 6 (android-x64 emulator)</div>
<svg style="left:998px;top:3px" width="12" height="12" fill="none" stroke="#9a9a9a" stroke-width="1.1"><circle cx="6" cy="6" r="5.2"/><path d="M2.5 9.5 L9.5 2.5"/></svg>
<div class="st" style="left:1015px">Prettier</div>
<svg style="left:1058px;top:2px" width="12" height="13" fill="none" stroke="#9a9a9a" stroke-width="1.1"><path d="M2 10 V6 Q2 2 6 2 Q10 2 10 6 V10 H1 M5 12 H7"/><circle cx="10" cy="2.5" r="2" fill="#9a9a9a" stroke="none"/></svg>
</div>
<div class="a" style="left:0;top:0;width:1081px;height:720px;border:1px solid #4a4b4f;border-right-color:#5a5b5f;pointer-events:none"></div>
</div>
<svg style="left:0;top:0" width="1366" height="720" viewBox="0 0 1366 720"><defs><mask id="wm"><rect x="0" y="0" width="1366" height="720" fill="#fff"/><rect x="713" y="670" width="2.6" height="40" fill="#000"/></mask></defs><g mask="url(#wm)" fill="none" stroke="#6b6b6b" stroke-width="5.2"><path d="M603.6 684 V695 Q603.6 702 610.5 702 H630.5 Q637.4 702 637.4 695 V684"/><path d="M646.3 684 V695 Q646.3 702 653 702 H762"/><path d="M666.5 686 V696 Q666.5 702 672 702"/><path d="M680.8 684 V702 M695 684 V702"/><path d="M706.8 693 A8.8 8.8 0 1 1 715.6 701.8"/><path d="M739 692 Q749 680 757 687.5 Q762 692 762 702"/></g><g mask="url(#wm)" fill="#6b6b6b"><rect x="704" y="673.2" width="9.3" height="5.3"/><rect x="704" y="673.2" width="5.6" height="15"/><rect x="715.6" y="673.2" width="10.2" height="5.3"/><path d="M748.8 672.9 L753.1 677.2 L748.8 681.5 L744.5 677.2Z"/><path d="M615.8 675 L619 678.2 L615.8 681.4 L612.6 678.2Z M627 675 L630.2 678.2 L627 681.4 L623.8 678.2Z"/></g></svg>
<div id="emu" class="a">
<div class="a" style="left:0;top:0;width:285px;height:720px;background:linear-gradient(180deg,#2a7dbf 0px,#2a7dbf 30px,#9fb0b5 600px,#a9b2ae 720px)"></div>
<div class="a" style="left:0;top:600px;width:285px;height:120px;background:linear-gradient(101deg,#b2b8b4 0px,#a0a9ae 21px,#cec7a8 49px,#a1a9ae 77px,#cfc8a9 106px,#9fa8ad 135px,#cdc6a8 163px,#a2aaaf 192px,#d0c9aa 224px,#a3abb0 257px,#c9c4ab 285px,#c0c0b0 303px)"></div>
<div class="a" style="left:0;top:600px;width:285px;height:45px;background:linear-gradient(180deg,rgba(185,198,200,0.55),rgba(185,198,200,0))"></div>
<div class="a" style="left:0;top:-3px;width:287px;height:615px;border-radius:16px;background:#1b1b1b"></div>
<div class="a" style="left:2px;top:-1px;width:283px;height:611px;border-radius:14px;border:6px solid #343434;border-top-color:#3a3a3a;background:#121212"></div>
<div class="a" style="left:3.5px;top:1px;width:280px;height:607px;border-radius:13px;border:2.5px solid #555555;border-top-color:#6a6a6a;border-bottom-color:#4a4a4a"></div>
<div class="a" style="left:8px;top:4px;width:270px;height:602px;border-radius:10px;background:#111111;border-bottom:7px solid #272727"></div>
<div class="a" style="left:13px;top:15px;width:261px;height:580px;border-radius:7px;overflow:hidden;background:#000">
<div class="a" style="left:0;top:0;width:261px;height:549px;background:#e0f2f1"></div>
<div class="a" style="left:0;top:0;width:18px;height:549px;background:linear-gradient(90deg,rgba(190,205,205,0.5),rgba(224,242,241,0))"></div>
<div class="a" style="left:5px;top:3px;font-size:9px;color:#ffffff;opacity:0.5">5:39</div>
<div class="a" style="left:31px;top:3px;font-size:9px;color:#ffffff;opacity:0.5">S</div>
<svg style="left:215px;top:3px" width="32" height="9"><path d="M0 2.5 Q4.5 -1 9 2.5 L4.5 8Z" fill="#fff"/><path d="M12 8 L18 1.5 V8Z" fill="#fff"/><rect x="24" y="1.5" width="4" height="7" rx="0.8" fill="#fff"/></svg>
<div class="a" style="left:123px;top:7.5px;width:15px;height:15px;border-radius:8px;background:radial-gradient(circle at 50% 50%,#2a2a2a 0,#0a0a0a 70%)"></div>
<div class="a" style="left:126.5px;top:12px;width:3px;height:3px;border-radius:2px;background:#d9d0c0"></div>
<div class="a" style="left:130.5px;top:16px;width:2px;height:2px;border-radius:1px;background:#e0a030"></div>
<div class="a" style="left:26px;top:151px;font-size:14.6px;font-weight:bold;color:#25968a;white-space:nowrap">Welcome! Let's get started</div>
<svg style="left:215px;top:150px" width="19" height="19" viewBox="0 0 19 19"><path d="M2 18 L7 6 L13 12Z" fill="#f0a830"/><path d="M4 13 L8.5 16.5 M5.5 9.5 L11 14" stroke="#e85d3a" stroke-width="1.3"/><circle cx="12" cy="3" r="1.3" fill="#4aa3e8"/><circle cx="16" cy="8" r="1.2" fill="#e84a7a"/><path d="M10 6 Q12 4 11 1 M13 9 Q16 7 18 9" stroke="#9b6bd6" stroke-width="1" fill="none"/><circle cx="16.5" cy="3" r="1" fill="#f0c030"/></svg>
<div class="a" style="left:15px;top:186px;width:230px;height:227px;border-radius:11px;background:#f5f0f6;box-shadow:0 3px 7px rgba(0,0,0,0.26),0 0 2px rgba(0,0,0,0.1)">
<div class="a" style="left:13px;top:15px;font-size:13.3px;font-weight:bold;color:#25968a;white-space:nowrap">Create Account</div>
<div class="a" style="left:12px;top:42px;width:206px;height:35px;border:1px solid #8e8991;border-radius:7px"></div>
<svg style="left:21px;top:54px" width="13" height="11" viewBox="0 0 13 11"><rect x="0" y="0" width="13" height="11" rx="1" fill="#48464c"/><path d="M0.5 1.5 L6.5 5.5 L12.5 1.5" stroke="#f5f0f6" stroke-width="1.1" fill="none"/></svg>
<div class="a" style="left:46px;top:53.5px;font-size:10px;color:#77737a;white-space:nowrap">Email</div>
<div class="a" style="left:12px;top:87px;width:206px;height:35px;border:1px solid #8e8991;border-radius:7px"></div>
<svg style="left:22px;top:96px" width="12" height="15" viewBox="0 0 12 15"><path d="M3 6.5 V4.5 Q3 1.2 6 1.2 Q9 1.2 9 4.5 V6.5" stroke="#48464c" stroke-width="1.7" fill="none"/><rect x="0.5" y="6.2" width="11" height="8.5" rx="1.2" fill="#48464c"/><circle cx="6" cy="10.4" r="1.3" fill="#f5f0f6"/></svg>
<div class="a" style="left:46px;top:98.5px;font-size:10px;color:#77737a;white-space:nowrap">Password</div>
<div class="a" style="left:12px;top:138px;width:206px;height:36px;border-radius:7px;background:#009689;box-shadow:0 1px 2px rgba(0,0,0,0.3);color:#fff;font-size:11px;font-weight:bold;text-align:center;line-height:36px">Create Account</div>
<div class="a" style="left:42px;top:194px;font-size:9px;color:#58555c;white-space:nowrap">Already have an account?</div>
<div class="a" style="left:155px;top:194px;font-size:9px;font-weight:bold;color:#268a80;white-space:nowrap">Log In</div>
</div>
<svg style="left:48px;top:558px" width="13" height="13"><path d="M12 0.5 V12.5 L1 6.5Z" fill="#fff"/></svg>
<div class="a" style="left:124px;top:558px;width:12px;height:12px;border-radius:6px;background:#fff"></div>
<div class="a" style="left:200px;top:559px;width:10px;height:10px;border-radius:1px;background:#fff"></div>
</div>
</div>
</body></html>
